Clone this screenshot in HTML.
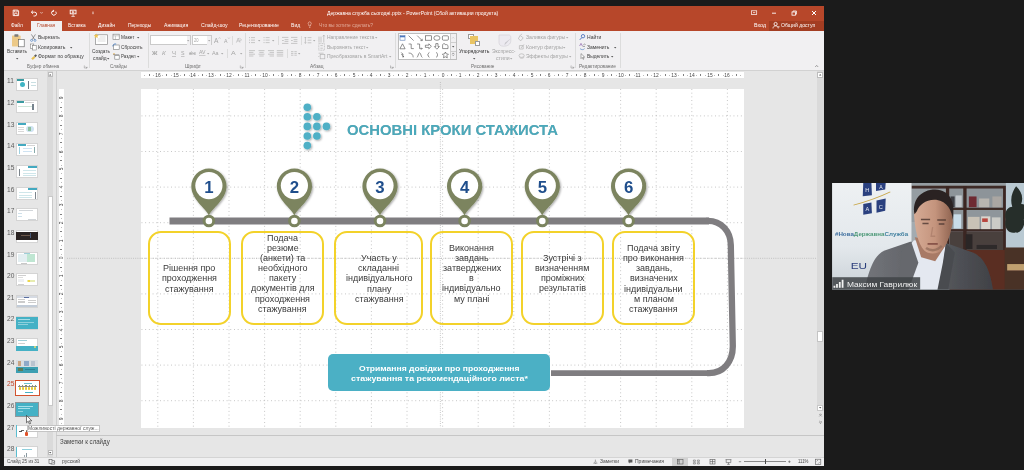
<!DOCTYPE html>
<html><head><meta charset="utf-8">
<style>
*{margin:0;padding:0;box-sizing:border-box}
html,body{width:1024px;height:470px;overflow:hidden;background:#1b1b1b;font-family:"Liberation Sans",sans-serif}
#root{position:absolute;left:0;top:0;width:1024px;height:470px;overflow:hidden;background:#1b1b1b;opacity:0.999;filter:blur(0.3px)}
.a{position:absolute}
.t{position:absolute;white-space:nowrap;line-height:1;font-size:5.4px;color:#4a4a4a;transform:translateY(-50%)}
.w{color:#fff}
.g{color:#a6a6a6}
svg{position:absolute;overflow:visible}
text{font-family:"Liberation Sans",sans-serif;white-space:pre}
</style></head><body><div id="root">

<div class="a" style="left:4px;top:6.1px;width:819.7px;height:460px;background:#e6e6e6;"></div>
<div class="a" style="left:4px;top:6.1px;width:819.7px;height:24.9px;background:#b7472a;"></div>
<div class="a" style="left:4px;top:30.6px;width:819.7px;height:40px;background:#f1f0f2;border-bottom:0.8px solid #d2d2d2;"></div>
<svg class="a" style="left:327.30px;top:-5px;" width="10" height="26"><text x="0" y="20" font-size="5.3" text-anchor="start" textLength="171.20" lengthAdjust="spacingAndGlyphs" fill="#fff">Державна служба сьогодні.pptx - PowerPoint (Сбой активации продукта)</text></svg>
<div class="a" style="left:31px;top:20.5px;width:30.5px;height:10.5px;background:#f1f0f2;"></div>
<svg class="a" style="left:11.20px;top:7px;" width="10" height="26"><text x="0" y="20" font-size="5.3" text-anchor="start" textLength="11.80" lengthAdjust="spacingAndGlyphs" fill="#fff">Файл</text></svg>
<svg class="a" style="left:68.00px;top:7px;" width="10" height="26"><text x="0" y="20" font-size="5.3" text-anchor="start" textLength="17.60" lengthAdjust="spacingAndGlyphs" fill="#fff">Вставка</text></svg>
<svg class="a" style="left:98.00px;top:7px;" width="10" height="26"><text x="0" y="20" font-size="5.3" text-anchor="start" textLength="17.00" lengthAdjust="spacingAndGlyphs" fill="#fff">Дизайн</text></svg>
<svg class="a" style="left:128.00px;top:7px;" width="10" height="26"><text x="0" y="20" font-size="5.3" text-anchor="start" textLength="23.20" lengthAdjust="spacingAndGlyphs" fill="#fff">Переходы</text></svg>
<svg class="a" style="left:163.80px;top:7px;" width="10" height="26"><text x="0" y="20" font-size="5.3" text-anchor="start" textLength="24.20" lengthAdjust="spacingAndGlyphs" fill="#fff">Анимация</text></svg>
<svg class="a" style="left:200.80px;top:7px;" width="10" height="26"><text x="0" y="20" font-size="5.3" text-anchor="start" textLength="26.70" lengthAdjust="spacingAndGlyphs" fill="#fff">Слайд-шоу</text></svg>
<svg class="a" style="left:239.00px;top:7px;" width="10" height="26"><text x="0" y="20" font-size="5.3" text-anchor="start" textLength="40.00" lengthAdjust="spacingAndGlyphs" fill="#fff">Рецензирование</text></svg>
<svg class="a" style="left:291.00px;top:7px;" width="10" height="26"><text x="0" y="20" font-size="5.3" text-anchor="start" textLength="9.20" lengthAdjust="spacingAndGlyphs" fill="#fff">Вид</text></svg>
<svg class="a" style="left:37.00px;top:7px;" width="10" height="26"><text x="0" y="20" font-size="5.3" text-anchor="start" textLength="18.20" lengthAdjust="spacingAndGlyphs" fill="#b7472a">Главная</text></svg>
<svg class="a" style="left:319.00px;top:7px;" width="10" height="26"><text x="0" y="20" font-size="5.3" text-anchor="start" textLength="54.00" lengthAdjust="spacingAndGlyphs" fill="#e3ad9c">Что вы хотите сделать?</text></svg>
<svg class="a" style="left:760.00px;top:7px;" width="10" height="26"><text x="0" y="20" font-size="5.3" text-anchor="middle" fill="#fff">Вход</text></svg>
<div class="a" style="left:769px;top:20.5px;width:54.7px;height:10.1px;background:#a33d22;"></div>
<svg class="a" style="left:781.00px;top:7px;" width="10" height="26"><text x="0" y="20" font-size="5.3" text-anchor="start" textLength="34.20" lengthAdjust="spacingAndGlyphs" fill="#fff">Общий доступ</text></svg>
<svg class="a" style="left:0;top:0" width="1024" height="32" viewBox="0 0 1024 32" fill="none" stroke="#fff" stroke-width="0.9">
<path d="M13.200 10.100h4.600l0.800 0.800v4.700h-5.400z"/><path d="M14.400 10.200v1.800h2.800v-1.800M14.400 15.600v-2h2.800v2" stroke-width="0.700"/>
<path d="M31.5 12.2h3.2a1.8 1.8 0 0 1 0 3.8h-1.2M33 10.6l-1.7 1.6l1.7 1.6"/><path d="M40.5 12.3l1 1l1-1" stroke-width="0.7"/>
<path d="M55.8 11.6a2.3 2.3 0 1 1-2.6-0.9M53.6 9.9v1.6h-1.6"/>
<rect x="70.2" y="10.2" width="5.8" height="3.6"/><path d="M73.1 13.8v2.4M71.4 16.4h3.4M72.4 11.2l1.8 0.9l-1.8 0.9z" stroke-width="0.7"/>
<path d="M92.2 12.2h1.6M92.4 13.4l0.6 0.7l0.6-0.7" stroke-width="0.7"/>
<rect x="751.5" y="10.8" width="5.2" height="3.6" stroke-width="0.7"/><path d="M753 12.6h2.2" stroke-width="0.7"/>
<path d="M772 13.2h4"/>
<rect x="792" y="12" width="3.4" height="3.2" stroke-width="0.8"/><path d="M793 12v-1h3.4v3.2h-1" stroke-width="0.8"/>
<path d="M812 11l4 4M816 11l-4 4" stroke-width="1"/>
<path d="M309 27.4h1.4M308.6 24.4a1.5 1.5 0 1 1 2.2 0l-0.4 1.6h-1.4z" stroke="#f3d2c6" stroke-width="0.6"/>
<circle cx="775.6" cy="24" r="1.6" stroke-width="0.8"/><path d="M773 28.4c0-3.4 5.2-3.4 5.2 0M777.6 26.8h2" stroke-width="0.8"/>
</svg>
<div class="a" style="left:88.5px;top:33px;width:0.8px;height:35px;background:#dcdcdc;"></div>
<div class="a" style="left:148.0px;top:33px;width:0.8px;height:35px;background:#dcdcdc;"></div>
<div class="a" style="left:244.9px;top:33px;width:0.8px;height:35px;background:#dcdcdc;"></div>
<div class="a" style="left:394.8px;top:33px;width:0.8px;height:35px;background:#dcdcdc;"></div>
<div class="a" style="left:575.3000000000001px;top:33px;width:0.8px;height:35px;background:#dcdcdc;"></div>
<div class="a" style="left:620.3000000000001px;top:33px;width:0.8px;height:35px;background:#dcdcdc;"></div>
<svg class="a" style="left:26.70px;top:48px;" width="10" height="26"><text x="0" y="20" font-size="5" text-anchor="start" textLength="32.20" lengthAdjust="spacingAndGlyphs" fill="#6e6e6e">Буфер обмена</text></svg>
<svg class="a" style="left:110.10px;top:48px;" width="10" height="26"><text x="0" y="20" font-size="5" text-anchor="start" textLength="17.00" lengthAdjust="spacingAndGlyphs" fill="#6e6e6e">Слайды</text></svg>
<svg class="a" style="left:185.30px;top:48px;" width="10" height="26"><text x="0" y="20" font-size="5" text-anchor="start" textLength="16.10" lengthAdjust="spacingAndGlyphs" fill="#6e6e6e">Шрифт</text></svg>
<svg class="a" style="left:310.20px;top:48px;" width="10" height="26"><text x="0" y="20" font-size="5" text-anchor="start" textLength="13.60" lengthAdjust="spacingAndGlyphs" fill="#6e6e6e">Абзац</text></svg>
<svg class="a" style="left:470.90px;top:48px;" width="10" height="26"><text x="0" y="20" font-size="5" text-anchor="start" textLength="23.40" lengthAdjust="spacingAndGlyphs" fill="#6e6e6e">Рисование</text></svg>
<svg class="a" style="left:579.40px;top:48px;" width="10" height="26"><text x="0" y="20" font-size="5" text-anchor="start" textLength="36.90" lengthAdjust="spacingAndGlyphs" fill="#6e6e6e">Редактирование</text></svg>
<svg class="a" style="left:7.00px;top:33px;" width="10" height="26"><text x="0" y="20" font-size="5.4" text-anchor="start" textLength="20.10" lengthAdjust="spacingAndGlyphs" fill="#3c3c3c">Вставить</text></svg>
<svg class="a" style="left:16.0px;top:57.6px" width="2.4" height="1.4" viewBox="0 0 2.4 1.4"><path d="M0 0h2.4l-1.2 1.4z" fill="#555"/></svg>
<svg class="a" style="left:38.10px;top:19px;" width="10" height="26"><text x="0" y="20" font-size="5.4" text-anchor="start" textLength="21.70" lengthAdjust="spacingAndGlyphs" fill="#3c3c3c">Вырезать</text></svg>
<svg class="a" style="left:38.10px;top:29px;" width="10" height="26"><text x="0" y="20" font-size="5.4" text-anchor="start" textLength="27.40" lengthAdjust="spacingAndGlyphs" fill="#3c3c3c">Копировать</text></svg>
<svg class="a" style="left:69.8px;top:46.6px" width="2.4" height="1.4" viewBox="0 0 2.4 1.4"><path d="M0 0h2.4l-1.2 1.4z" fill="#555"/></svg>
<svg class="a" style="left:38.10px;top:38px;" width="10" height="26"><text x="0" y="20" font-size="5.4" text-anchor="start" textLength="45.70" lengthAdjust="spacingAndGlyphs" fill="#3c3c3c">Формат по образцу</text></svg>
<svg class="a" style="left:92.00px;top:33px;" width="10" height="26"><text x="0" y="20" font-size="5.4" text-anchor="start" textLength="17.90" lengthAdjust="spacingAndGlyphs" fill="#3c3c3c">Создать</text></svg>
<svg class="a" style="left:93.00px;top:40px;" width="10" height="26"><text x="0" y="20" font-size="5.4" text-anchor="start" textLength="13.60" lengthAdjust="spacingAndGlyphs" fill="#3c3c3c">слайд</text></svg>
<svg class="a" style="left:107.39999999999999px;top:58.0px" width="2.4" height="1.4" viewBox="0 0 2.4 1.4"><path d="M0 0h2.4l-1.2 1.4z" fill="#555"/></svg>
<svg class="a" style="left:121.30px;top:19px;" width="10" height="26"><text x="0" y="20" font-size="5.4" text-anchor="start" textLength="13.50" lengthAdjust="spacingAndGlyphs" fill="#3c3c3c">Макет</text></svg>
<svg class="a" style="left:136.5px;top:36.8px" width="2.4" height="1.4" viewBox="0 0 2.4 1.4"><path d="M0 0h2.4l-1.2 1.4z" fill="#555"/></svg>
<svg class="a" style="left:121.30px;top:29px;" width="10" height="26"><text x="0" y="20" font-size="5.4" text-anchor="start" textLength="21.50" lengthAdjust="spacingAndGlyphs" fill="#3c3c3c">Сбросить</text></svg>
<svg class="a" style="left:121.30px;top:38px;" width="10" height="26"><text x="0" y="20" font-size="5.4" text-anchor="start" textLength="14.60" lengthAdjust="spacingAndGlyphs" fill="#3c3c3c">Раздел</text></svg>
<svg class="a" style="left:137.4px;top:56.1px" width="2.4" height="1.4" viewBox="0 0 2.4 1.4"><path d="M0 0h2.4l-1.2 1.4z" fill="#555"/></svg>
<div class="a" style="left:150.4px;top:35.3px;width:40.4px;height:10px;background:#fff;border:0.7px solid #cacaca;"></div>
<div class="a" style="left:191.9px;top:35.3px;width:19.7px;height:10px;background:#fff;border:0.7px solid #cacaca;"></div>
<div class="a" style="left:186.6px;top:36px;width:3.6px;height:8.6px;background:#f1f0f2;"></div>
<div class="a" style="left:207.4px;top:36px;width:3.6px;height:8.6px;background:#f1f0f2;"></div>
<svg class="a" style="left:187.20000000000002px;top:39.8px" width="2.4" height="1.4" viewBox="0 0 2.4 1.4"><path d="M0 0h2.4l-1.2 1.4z" fill="#aaa"/></svg>
<svg class="a" style="left:208.0px;top:39.8px" width="2.4" height="1.4" viewBox="0 0 2.4 1.4"><path d="M0 0h2.4l-1.2 1.4z" fill="#aaa"/></svg>
<svg class="a" style="left:194.00px;top:22px;" width="10" height="26"><text x="0" y="20" font-size="5" text-anchor="start" textLength="4.50" lengthAdjust="spacingAndGlyphs" fill="#a6a6a6">20</text></svg>
<svg class="a" style="left:213.80px;top:23px;" width="10" height="26"><text x="0" y="20" font-size="6.4" text-anchor="start" textLength="4.40" lengthAdjust="spacingAndGlyphs" fill="#a6a6a6">A</text></svg>
<svg class="a" style="left:224.10px;top:23px;" width="10" height="26"><text x="0" y="20" font-size="5.4" text-anchor="start" textLength="3.50" lengthAdjust="spacingAndGlyphs" fill="#a6a6a6">A</text></svg>
<svg class="a" style="left:0;top:0" width="1024" height="72" viewBox="0 0 1024 72" fill="none" stroke="#b0b0b0" stroke-width="0.6"><path d="M218.6 38.6l0.9-1l0.9 1M228 37.6l0.9 1l0.9-1"/><path d="M236.4 42.6l1.8-4.6l1.8 4.6M237 41h2.4M239.4 38.2l2 1.4l-1.2 1.8" /></svg>
<div class="a" style="left:232.3px;top:36.2px;width:0.6px;height:8.6px;background:#dcdcdc;"></div>
<div class="a" style="left:227.2px;top:48.6px;width:0.6px;height:9px;background:#dcdcdc;"></div>
<svg class="a" style="left:152.00px;top:35px;" width="10" height="26"><text x="0" y="20" font-size="5.6" text-anchor="start" textLength="5.50" lengthAdjust="spacingAndGlyphs" fill="#a6a6a6" font-weight="bold">Ж</text></svg>
<svg class="a" style="left:161.80px;top:35px;" width="10" height="26"><text x="0" y="20" font-size="5.6" text-anchor="start" textLength="3.70" lengthAdjust="spacingAndGlyphs" fill="#a6a6a6" font-style="italic">К</text></svg>
<svg class="a" style="left:171.80px;top:35px;" width="10" height="26"><text x="0" y="20" font-size="5.6" text-anchor="start" textLength="4.00" lengthAdjust="spacingAndGlyphs" fill="#a6a6a6" text-decoration="underline">Ч</text></svg>
<svg class="a" style="left:181.30px;top:35px;" width="10" height="26"><text x="0" y="20" font-size="5.6" text-anchor="start" textLength="3.50" lengthAdjust="spacingAndGlyphs" fill="#a6a6a6" text-decoration="underline">S</text></svg>
<svg class="a" style="left:189.20px;top:35px;" width="10" height="26"><text x="0" y="20" font-size="5.2" text-anchor="start" textLength="6.80" lengthAdjust="spacingAndGlyphs" fill="#a6a6a6" text-decoration="line-through">abc</text></svg>
<svg class="a" style="left:198.50px;top:34px;" width="10" height="26"><text x="0" y="20" font-size="5" text-anchor="start" textLength="6.50" lengthAdjust="spacingAndGlyphs" fill="#a6a6a6" text-decoration="underline">AV</text></svg>
<svg class="a" style="left:206.8px;top:52.8px" width="2.4" height="1.4" viewBox="0 0 2.4 1.4"><path d="M0 0h2.4l-1.2 1.4z" fill="#aaa"/></svg>
<svg class="a" style="left:212.40px;top:35px;" width="10" height="26"><text x="0" y="20" font-size="5.6" text-anchor="start" textLength="6.60" lengthAdjust="spacingAndGlyphs" fill="#a6a6a6">Aa</text></svg>
<svg class="a" style="left:221.0px;top:52.8px" width="2.4" height="1.4" viewBox="0 0 2.4 1.4"><path d="M0 0h2.4l-1.2 1.4z" fill="#aaa"/></svg>
<svg class="a" style="left:231.40px;top:35px;" width="10" height="26"><text x="0" y="20" font-size="6.2" text-anchor="start" textLength="4.70" lengthAdjust="spacingAndGlyphs" fill="#a6a6a6">A</text></svg>
<svg class="a" style="left:239.8px;top:52.8px" width="2.4" height="1.4" viewBox="0 0 2.4 1.4"><path d="M0 0h2.4l-1.2 1.4z" fill="#aaa"/></svg>
<svg class="a" style="left:0;top:0" width="1024" height="72" viewBox="0 0 1024 72" fill="none" stroke="#b4b4b4" stroke-width="0.7"><path d="M251 37.6h4"/><path d="M249 37.6h0.9" stroke-width="0.9"/><path d="M251 40.1h4"/><path d="M249 40.1h0.9" stroke-width="0.9"/><path d="M251 42.6h4"/><path d="M249 42.6h0.9" stroke-width="0.9"/><path d="M265.6 37.6h4"/><path d="M263.6 37.6h0.9" stroke-width="0.9"/><path d="M265.6 40.1h4"/><path d="M263.6 40.1h0.9" stroke-width="0.9"/><path d="M265.6 42.6h4"/><path d="M263.6 42.6h0.9" stroke-width="0.9"/><path d="M282 37.4h6.4M284.6 39.6h3.8M284.6 41.4h3.8M282 43.4h6.4M282 40.5h1.8"/><path d="M291 37.4h6.4M293.6 39.6h3.8M293.6 41.4h3.8M291 43.4h6.4M291 40.5h1.8"/><path d="M307.6 37.6h3.8M307.6 40.2h3.8M307.6 42.8h3.8M305.4 37v6.4M304.6 38l0.8-1l0.8 1M304.6 42.4l0.8 1l0.8-1"/><path d="M249 50.6h6"/><path d="M249 52.4h4.4"/><path d="M249 54.2h6"/><path d="M249 56h4.4"/><path d="M258.5 50.6h6"/><path d="M259.3 52.4h4.4"/><path d="M258.5 54.2h6"/><path d="M259.3 56h4.4"/><path d="M268 50.6h6"/><path d="M269.6 52.4h4.4"/><path d="M268 54.2h6"/><path d="M269.6 56h4.4"/><path d="M276.8 50.6h6.4"/><path d="M276.8 52.4h6.4"/><path d="M276.8 54.2h6.4"/><path d="M276.8 56h6.4"/><path d="M291 51.6h2.4M291 53.4h2.4M291 55.2h2.4M294.4 51.6h2.4M294.4 53.4h2.4M294.4 55.2h2.4"/><path d="M319 42.6v-6M321 42.6v-6M323.8 42.6v-7.4M322.8 36.4l1-1.4l1 1.4"/><rect x="318.8" y="43.6" width="5.6" height="6.6" stroke-dasharray="1 0.6"/><path d="M320.4 45.6h2.4M320.4 48.2h2.4"/><rect x="320.2" y="54.6" width="4.6" height="4.2"/><path d="M318.6 53.2h5M319.4 55.8l-1 1.2"/><path d="M520 35.4l3.2 2.4l-2.4 3l-2.4-2zM521 35l0.6-1.2" /><path d="M519.4 45.6h3.8v3.4h-3.8zM521 48l3-3.6"/><ellipse cx="521.6" cy="55.6" rx="2.6" ry="1.8"/><path d="M519.6 57.6c1.4 1 3.4 0.8 4.6-0.4"/><path d="M84.5 65.6h-0.2v2.4h2.4M85.7 66.6l1.4 1.4M87.10000000000001 66.8v1.2h-1.2" stroke="#8a8a8a" stroke-width="0.5"/><path d="M240.5 65.6h-0.2v2.4h2.4M241.7 66.6l1.4 1.4M243.1 66.8v1.2h-1.2" stroke="#8a8a8a" stroke-width="0.5"/><path d="M390.7 65.6h-0.2v2.4h2.4M391.9 66.6l1.4 1.4M393.29999999999995 66.8v1.2h-1.2" stroke="#8a8a8a" stroke-width="0.5"/><path d="M571.1999999999999 65.6h-0.2v2.4h2.4M572.4 66.6l1.4 1.4M573.8 66.8v1.2h-1.2" stroke="#8a8a8a" stroke-width="0.5"/></svg>
<svg class="a" style="left:257.8px;top:39.6px" width="2.4" height="1.4" viewBox="0 0 2.4 1.4"><path d="M0 0h2.4l-1.2 1.4z" fill="#aaa"/></svg>
<svg class="a" style="left:272.40000000000003px;top:39.6px" width="2.4" height="1.4" viewBox="0 0 2.4 1.4"><path d="M0 0h2.4l-1.2 1.4z" fill="#aaa"/></svg>
<svg class="a" style="left:312.7px;top:39.6px" width="2.4" height="1.4" viewBox="0 0 2.4 1.4"><path d="M0 0h2.4l-1.2 1.4z" fill="#aaa"/></svg>
<svg class="a" style="left:298.40000000000003px;top:53.0px" width="2.4" height="1.4" viewBox="0 0 2.4 1.4"><path d="M0 0h2.4l-1.2 1.4z" fill="#aaa"/></svg>
<div class="a" style="left:278px;top:36.2px;width:0.6px;height:8.6px;background:#dcdcdc;"></div>
<div class="a" style="left:301.4px;top:36.2px;width:0.6px;height:8.6px;background:#dcdcdc;"></div>
<div class="a" style="left:286.6px;top:49px;width:0.6px;height:9px;background:#dcdcdc;"></div>
<svg class="a" style="left:326.70px;top:19px;" width="10" height="26"><text x="0" y="20" font-size="5.4" text-anchor="start" textLength="47.20" lengthAdjust="spacingAndGlyphs" fill="#a2a2a2">Направление текста</text></svg>
<svg class="a" style="left:374.8px;top:36.8px" width="2.4" height="1.4" viewBox="0 0 2.4 1.4"><path d="M0 0h2.4l-1.2 1.4z" fill="#aaa"/></svg>
<svg class="a" style="left:326.70px;top:29px;" width="10" height="26"><text x="0" y="20" font-size="5.4" text-anchor="start" textLength="38.40" lengthAdjust="spacingAndGlyphs" fill="#a2a2a2">Выровнять текст</text></svg>
<svg class="a" style="left:366.1px;top:46.699999999999996px" width="2.4" height="1.4" viewBox="0 0 2.4 1.4"><path d="M0 0h2.4l-1.2 1.4z" fill="#aaa"/></svg>
<svg class="a" style="left:326.70px;top:38px;" width="10" height="26"><text x="0" y="20" font-size="5.4" text-anchor="start" textLength="60.40" lengthAdjust="spacingAndGlyphs" fill="#a2a2a2">Преобразовать в SmartArt</text></svg>
<svg class="a" style="left:388.5px;top:56.1px" width="2.4" height="1.4" viewBox="0 0 2.4 1.4"><path d="M0 0h2.4l-1.2 1.4z" fill="#aaa"/></svg>
<div class="a" style="left:398.2px;top:33.1px;width:58.5px;height:26.5px;background:#fff;border:0.7px solid #bdbdbd;"></div>
<div class="a" style="left:450.3px;top:33.7px;width:5.9px;height:25.3px;background:#f1f0f2;border-left:0.6px solid #cfcfcf;"></div>
<div class="a" style="left:450.6px;top:42px;width:5.4px;height:0.5px;background:#cfcfcf;"></div>
<div class="a" style="left:450.6px;top:50.6px;width:5.4px;height:0.5px;background:#cfcfcf;"></div>
<svg class="a" style="left:0;top:0" width="1024" height="72" viewBox="0 0 1024 72" fill="none" stroke="#4a4a4a" stroke-width="0.6"><rect x="400" y="35.6" width="5" height="4.6" stroke="#5a7ab0"/><path d="M400 36.6h5" stroke="#4a78c0" stroke-width="1.4"/><path d="M408.6 35.6l5 5M417.2 35.6l5 5M422.2 40.6v-1.8M422.2 40.6h-1.8"/><rect x="425.4" y="35.8" width="6" height="4.4"/><ellipse cx="436.9" cy="38" rx="3.1" ry="2.3"/><rect x="442.4" y="35.8" width="6" height="4.4" rx="1"/><path d="M402.5 43.8l2.6 5h-5.2z"/><path d="M408.6 44h2.6v4.6h2.6M417 44h2.6v4.6h2.6M421.2 47.6l1 1l-1 1"/><path d="M425.4 45.2h3.4v-1.4l2.6 2.5l-2.6 2.5v-1.4h-3.4zM435.8 43.6h2.2v3h1.4l-2.5 2.6l-2.5-2.6h1.4z"/><path d="M442.6 48.6h5.4v-2.4a1.6 1.6 0 0 0-2.4-1.4a1.5 1.5 0 0 0-3 1z"/><path d="M401.2 52.4l2 2h-1.6l2 2.6M403.6 57l-0.2-1.4M403.6 57l-1.4-0.2M408.6 53c3 0 4.6 1.6 4.6 4.4M416.8 57.4c1.4 0 1.4-4.6 2.8-4.6s1.4 4.6 2.8 4.6"/><path d="M429.4 52.4c-1.2 0-0.8 2.4-1.8 2.4c1 0 0.6 2.6 1.8 2.6M436.2 52.4c1.2 0 0.8 2.4 1.8 2.4c-1 0-0.6 2.6-1.8 2.6"/><path d="M445.4 52l0.9 1.9l2.1 0.3l-1.5 1.5l0.4 2.1l-1.9-1l-1.9 1l0.4-2.1l-1.5-1.5l2.1-0.3z"/><path d="M452.2 38.4l1-1l1 1" stroke="#b8b8b8"/><path d="M452.2 53.4h2M452.2 54.6l1 1l1-1" stroke-width="0.5"/></svg>
<svg class="a" style="left:452.0px;top:46.0px" width="2.4" height="1.4" viewBox="0 0 2.4 1.4"><path d="M0 0h2.4l-1.2 1.4z" fill="#555"/></svg>
<div class="a" style="left:468.4px;top:34.2px;width:5.2px;height:4.8px;background:#fff;border:0.6px solid #9a9a9a;"></div>
<div class="a" style="left:470.2px;top:36.2px;width:7.8px;height:7.8px;background:#e9c463;"></div>
<div class="a" style="left:475px;top:41px;width:4.8px;height:4.8px;background:#fff;border:0.6px solid #9a9a9a;"></div>
<svg class="a" style="left:458.80px;top:33px;" width="10" height="26"><text x="0" y="20" font-size="5.6" text-anchor="start" textLength="30.50" lengthAdjust="spacingAndGlyphs" fill="#2e2e2e">Упорядочить</text></svg>
<svg class="a" style="left:473.0px;top:57.6px" width="2.4" height="1.4" viewBox="0 0 2.4 1.4"><path d="M0 0h2.4l-1.2 1.4z" fill="#555"/></svg>
<svg class="a" style="left:491.80px;top:33px;" width="10" height="26"><text x="0" y="20" font-size="5.4" text-anchor="start" textLength="23.40" lengthAdjust="spacingAndGlyphs" fill="#a2a2a2">Экспресс-</text></svg>
<svg class="a" style="left:495.80px;top:40px;" width="10" height="26"><text x="0" y="20" font-size="5.4" text-anchor="start" textLength="13.60" lengthAdjust="spacingAndGlyphs" fill="#a2a2a2">стили</text></svg>
<svg class="a" style="left:510.2px;top:58.1px" width="2.4" height="1.4" viewBox="0 0 2.4 1.4"><path d="M0 0h2.4l-1.2 1.4z" fill="#aaa"/></svg>
<svg class="a" style="left:0;top:0" width="1024" height="72" viewBox="0 0 1024 72" fill="none"><path d="M499 35h9.6c1.6 0 2.2 1 2.2 2.4v3c0 4-3 5.8-7.4 5.8c-3 0-4.4-1.400-4.400-3.600z" fill="#eceaf0" stroke="#d0ced4" stroke-width="0.6"/><path d="M510.600 38.600l-4.400 5l-1.800 1.600l0.600-2.400z" fill="#c8c6cc"/></svg>
<svg class="a" style="left:525.90px;top:19px;" width="10" height="26"><text x="0" y="20" font-size="5.4" text-anchor="start" textLength="39.20" lengthAdjust="spacingAndGlyphs" fill="#a2a2a2">Заливка фигуры</text></svg>
<svg class="a" style="left:566.0999999999999px;top:36.8px" width="2.4" height="1.4" viewBox="0 0 2.4 1.4"><path d="M0 0h2.4l-1.2 1.4z" fill="#aaa"/></svg>
<svg class="a" style="left:525.90px;top:29px;" width="10" height="26"><text x="0" y="20" font-size="5.4" text-anchor="start" textLength="36.70" lengthAdjust="spacingAndGlyphs" fill="#a2a2a2">Контур фигуры</text></svg>
<svg class="a" style="left:563.4px;top:46.699999999999996px" width="2.4" height="1.4" viewBox="0 0 2.4 1.4"><path d="M0 0h2.4l-1.2 1.4z" fill="#aaa"/></svg>
<svg class="a" style="left:525.90px;top:38px;" width="10" height="26"><text x="0" y="20" font-size="5.4" text-anchor="start" textLength="41.80" lengthAdjust="spacingAndGlyphs" fill="#a2a2a2">Эффекты фигуры</text></svg>
<svg class="a" style="left:568.6999999999999px;top:56.1px" width="2.4" height="1.4" viewBox="0 0 2.4 1.4"><path d="M0 0h2.4l-1.2 1.4z" fill="#aaa"/></svg>
<svg class="a" style="left:587.30px;top:19px;" width="10" height="26"><text x="0" y="20" font-size="5.4" text-anchor="start" textLength="14.40" lengthAdjust="spacingAndGlyphs" fill="#3c3c3c">Найти</text></svg>
<svg class="a" style="left:587.30px;top:29px;" width="10" height="26"><text x="0" y="20" font-size="5.4" text-anchor="start" textLength="22.40" lengthAdjust="spacingAndGlyphs" fill="#3c3c3c">Заменить</text></svg>
<svg class="a" style="left:613.6999999999999px;top:46.6px" width="2.4" height="1.4" viewBox="0 0 2.4 1.4"><path d="M0 0h2.4l-1.2 1.4z" fill="#555"/></svg>
<svg class="a" style="left:587.30px;top:38px;" width="10" height="26"><text x="0" y="20" font-size="5.4" text-anchor="start" textLength="22.40" lengthAdjust="spacingAndGlyphs" fill="#3c3c3c">Выделить</text></svg>
<svg class="a" style="left:611.1999999999999px;top:56.1px" width="2.4" height="1.4" viewBox="0 0 2.4 1.4"><path d="M0 0h2.4l-1.2 1.4z" fill="#555"/></svg>
<svg class="a" style="left:0;top:0" width="1024" height="72" viewBox="0 0 1024 72" fill="none"><rect x="12" y="35.6" width="8.6" height="10.8" rx="0.6" fill="#ecc988"/><rect x="14.4" y="34.2" width="4" height="2.6" rx="0.6" fill="#7a7a7a"/><rect x="18.4" y="39.4" width="5.8" height="7.4" fill="#fff" stroke="#5a5a5a" stroke-width="0.6"/><path d="M31.4 34.4l3.400 5.400M35.400 34.400l-3.400 5.400" stroke="#5a5a5a" stroke-width="0.6"/><circle cx="31.600" cy="40.400" r="1" stroke="#3f78c0" stroke-width="0.600"/><circle cx="35" cy="40.400" r="1" stroke="#3f78c0" stroke-width="0.600"/><rect x="30.400" y="44" width="3.400" height="4.400" fill="#fff" stroke="#6a6a6a" stroke-width="0.500"/><rect x="32.600" y="45.600" width="3.600" height="4.400" fill="#fff" stroke="#6a6a6a" stroke-width="0.500"/><path d="M31.200 58.400l2.800-2.400l1.400 1.400l-2.600 2.600z" fill="#e8c050"/><path d="M34 55.800l1.800-1.600l1.200 1.200l-1.600 1.800z" fill="#5a5a5a"/><rect x="95.600" y="34.800" width="12" height="9.800" fill="#fff" stroke="#8a8a8a" stroke-width="0.700"/><path d="M97.600 39h8M97.600 41h8M99.600 37h6" stroke="#c8c8c8" stroke-width="0.600"/><path d="M96.200 33.400l0.800 1.600l1.700 0.200l-1.300 1.200l0.400 1.700l-1.600-0.900l-1.500 0.900l0.300-1.700l-1.200-1.200l1.700-0.200z" fill="#eec453"/><rect x="113" y="34.200" width="6.200" height="5.400" fill="#fff" stroke="#7a7a7a" stroke-width="0.600"/><path d="M113 35.800h6.200M115.400 35.800v3.800" stroke="#9a9a9a" stroke-width="0.500"/><rect x="113.600" y="45" width="5.600" height="4.600" fill="#fff" stroke="#7a7a7a" stroke-width="0.600"/><path d="M112.800 46.400c0-2 1.600-2.800 3.400-2.400" stroke="#3f78c0" stroke-width="0.800"/><path d="M113 54h2" stroke="#e0a030" stroke-width="0.900"/><path d="M113.200 54.600h6" stroke="#7a7a7a" stroke-width="0.600"/><rect x="114.800" y="55.600" width="4.400" height="3.600" fill="#fff" stroke="#7a7a7a" stroke-width="0.600"/><circle cx="583" cy="36.200" r="1.700" stroke="#3f68b8" stroke-width="0.800"/><path d="M581.800 37.600l-2 2.200" stroke="#3f68b8" stroke-width="0.900"/><path d="M579.600 46l1.400-2.600l1.400 2.600" stroke="#7a4aa0" stroke-width="0.600"/><path d="M580 48.600c1.400 1.400 3.400 1.400 4.600 0" stroke="#3f78c0" stroke-width="0.600"/><path d="M582.600 46.400h2.400" stroke="#666" stroke-width="0.600"/><path d="M583.400 44.600c0.800-1 2-0.600 2 0.400" stroke="#5a5a5a" stroke-width="0.500"/><path d="M581 53.600v5l1.200-1.200l0.900 2l0.800-0.400l-0.900-1.900h1.700z" fill="#fff" stroke="#5a5a5a" stroke-width="0.500"/></svg>
<svg class="a" style="left:815.400px;top:65px" width="3.400" height="2.200" viewBox="0 0 3.400 2.200"><path d="M0.200 2l1.500-1.600l1.500 1.600" fill="none" stroke="#666" stroke-width="0.600"/></svg>
<div class="a" style="left:4px;top:71px;width:51.5px;height:386px;background:#e6e6e6;"></div>
<div class="a" style="left:55.5px;top:71px;width:0.8px;height:386px;background:#cfcfcf;"></div>
<div class="a" style="left:47.3px;top:71px;width:6px;height:386px;background:#dadada;"></div>
<div class="a" style="left:47.6px;top:72px;width:5.4px;height:5.4px;background:#fff;border:0.5px solid #bdbdbd;"></div>
<div class="a" style="left:47.6px;top:450.1px;width:5.3px;height:5.2px;background:#fff;border:0.5px solid #bdbdbd;"></div>
<div class="a" style="left:47.8px;top:196px;width:5px;height:209.5px;background:#fff;border:0.5px solid #c8c8c8;"></div>
<svg class="a" style="left:49.100px;top:74px" width="2.400" height="1.400" viewBox="0 0 2.400 1.400"><path d="M0 1.400h2.400l-1.200-1.400z" fill="#555"/></svg>
<svg class="a" style="left:49.099999999999994px;top:452.2px" width="2.4" height="1.4" viewBox="0 0 2.4 1.4"><path d="M0 0h2.4l-1.2 1.4z" fill="#555"/></svg>
<svg class="a" style="left:6.60px;top:63px;" width="10" height="26"><text x="0" y="20" font-size="6.6" text-anchor="start" fill="#5c5c5c">11</text></svg>
<div class="a" style="left:16px;top:78.3px;width:22.4px;height:13.2px;background:#fff;border:0.5px solid #d4d4d4;"></div>
<svg class="a" style="left:6.60px;top:85px;" width="10" height="26"><text x="0" y="20" font-size="6.6" text-anchor="start" fill="#5c5c5c">12</text></svg>
<div class="a" style="left:16px;top:99.94999999999999px;width:22.4px;height:13.2px;background:#fff;border:0.5px solid #d4d4d4;"></div>
<svg class="a" style="left:6.60px;top:107px;" width="10" height="26"><text x="0" y="20" font-size="6.6" text-anchor="start" fill="#5c5c5c">13</text></svg>
<div class="a" style="left:16px;top:121.6px;width:22.4px;height:13.2px;background:#fff;border:0.5px solid #d4d4d4;"></div>
<svg class="a" style="left:6.60px;top:128px;" width="10" height="26"><text x="0" y="20" font-size="6.6" text-anchor="start" fill="#5c5c5c">14</text></svg>
<div class="a" style="left:16px;top:143.25px;width:22.4px;height:13.2px;background:#fff;border:0.5px solid #d4d4d4;"></div>
<svg class="a" style="left:6.60px;top:150px;" width="10" height="26"><text x="0" y="20" font-size="6.6" text-anchor="start" fill="#5c5c5c">15</text></svg>
<div class="a" style="left:16px;top:164.89999999999998px;width:22.4px;height:13.2px;background:#fff;border:0.5px solid #d4d4d4;"></div>
<svg class="a" style="left:6.60px;top:172px;" width="10" height="26"><text x="0" y="20" font-size="6.6" text-anchor="start" fill="#5c5c5c">16</text></svg>
<div class="a" style="left:16px;top:186.55px;width:22.4px;height:13.2px;background:#fff;border:0.5px solid #d4d4d4;"></div>
<svg class="a" style="left:6.60px;top:193px;" width="10" height="26"><text x="0" y="20" font-size="6.6" text-anchor="start" fill="#5c5c5c">17</text></svg>
<div class="a" style="left:16px;top:208.2px;width:22.4px;height:13.2px;background:#fff;border:0.5px solid #d4d4d4;"></div>
<svg class="a" style="left:6.60px;top:215px;" width="10" height="26"><text x="0" y="20" font-size="6.6" text-anchor="start" fill="#5c5c5c">18</text></svg>
<div class="a" style="left:16px;top:229.84999999999997px;width:22.4px;height:13.2px;background:#fff;border:0.5px solid #d4d4d4;"></div>
<svg class="a" style="left:6.60px;top:237px;" width="10" height="26"><text x="0" y="20" font-size="6.6" text-anchor="start" fill="#5c5c5c">19</text></svg>
<div class="a" style="left:16px;top:251.5px;width:22.4px;height:13.2px;background:#fff;border:0.5px solid #d4d4d4;"></div>
<svg class="a" style="left:6.60px;top:258px;" width="10" height="26"><text x="0" y="20" font-size="6.6" text-anchor="start" fill="#5c5c5c">20</text></svg>
<div class="a" style="left:16px;top:273.15px;width:22.4px;height:13.2px;background:#fff;border:0.5px solid #d4d4d4;"></div>
<svg class="a" style="left:6.60px;top:280px;" width="10" height="26"><text x="0" y="20" font-size="6.6" text-anchor="start" fill="#5c5c5c">21</text></svg>
<div class="a" style="left:16px;top:294.8px;width:22.4px;height:13.2px;background:#fff;border:0.5px solid #d4d4d4;"></div>
<svg class="a" style="left:6.60px;top:301px;" width="10" height="26"><text x="0" y="20" font-size="6.6" text-anchor="start" fill="#5c5c5c">22</text></svg>
<div class="a" style="left:16px;top:316.45px;width:22.4px;height:13.2px;background:#fff;border:0.5px solid #d4d4d4;"></div>
<svg class="a" style="left:6.60px;top:323px;" width="10" height="26"><text x="0" y="20" font-size="6.6" text-anchor="start" fill="#5c5c5c">23</text></svg>
<div class="a" style="left:16px;top:338.09999999999997px;width:22.4px;height:13.2px;background:#fff;border:0.5px solid #d4d4d4;"></div>
<svg class="a" style="left:6.60px;top:345px;" width="10" height="26"><text x="0" y="20" font-size="6.6" text-anchor="start" fill="#5c5c5c">24</text></svg>
<div class="a" style="left:16px;top:359.75px;width:22.4px;height:13.2px;background:#fff;border:0.5px solid #d4d4d4;"></div>
<svg class="a" style="left:6.60px;top:366px;" width="10" height="26"><text x="0" y="20" font-size="6.6" text-anchor="start" fill="#c0452a">25</text></svg>
<div class="a" style="left:14.6px;top:380.2px;width:25.2px;height:16.2px;background:#fff;border:1.6px solid #d2532f;"></div>
<svg class="a" style="left:6.60px;top:388px;" width="10" height="26"><text x="0" y="20" font-size="6.6" text-anchor="start" fill="#5c5c5c">26</text></svg>
<div class="a" style="left:15.4px;top:402.45px;width:23.6px;height:14.6px;background:#45b1c5;border:1px solid #8f979b;"></div>
<svg class="a" style="left:6.60px;top:410px;" width="10" height="26"><text x="0" y="20" font-size="6.6" text-anchor="start" fill="#5c5c5c">27</text></svg>
<div class="a" style="left:16px;top:424.7px;width:22.4px;height:13.2px;background:#fff;border:0.5px solid #d4d4d4;"></div>
<svg class="a" style="left:6.60px;top:431px;" width="10" height="26"><text x="0" y="20" font-size="6.6" text-anchor="start" fill="#5c5c5c">28</text></svg>
<div class="a" style="left:16px;top:446.34999999999997px;width:22.4px;height:13.2px;background:#fff;border:0.5px solid #d4d4d4;"></div>
<div class="a" style="left:17px;top:79.3px;width:7px;height:1.6px;background:#3a9aa0;"></div>
<div class="a" style="left:19.5px;top:82.3px;width:5px;height:5px;background:#3fb4c4;border-radius:50%;"></div>
<div class="a" style="left:27.5px;top:81.3px;width:1.4px;height:8px;background:#6c7a86;"></div>
<div class="a" style="left:31px;top:82.3px;width:5px;height:0.6px;background:#c9dfe2;"></div>
<div class="a" style="left:31px;top:85.3px;width:5px;height:0.6px;background:#c9dfe2;"></div>
<div class="a" style="left:17px;top:101.35px;width:7px;height:1.6px;background:#3a9aa0;"></div>
<div class="a" style="left:18px;top:106.44999999999999px;width:15px;height:1px;background:#cfe5d8;"></div>
<div class="a" style="left:32px;top:104.44999999999999px;width:1.6px;height:6px;background:#76838e;"></div>
<div class="a" style="left:25px;top:101.94999999999999px;width:9px;height:0.6px;background:#d5d5d5;"></div>
<div class="a" style="left:17.5px;top:122.8px;width:8px;height:1.8px;background:#43a9c0;"></div>
<div class="a" style="left:26px;top:125.6px;width:8px;height:6px;background:#cfe3f2;border-radius:3px;"></div>
<div class="a" style="left:28px;top:126.6px;width:3px;height:4px;background:#8fc0a0;"></div>
<div class="a" style="left:18px;top:126.6px;width:6px;height:0.6px;background:#d8d8d8;"></div>
<div class="a" style="left:18px;top:128.6px;width:6px;height:0.6px;background:#d8d8d8;"></div>
<div class="a" style="left:18px;top:130.6px;width:6px;height:0.6px;background:#d8d8d8;"></div>
<div class="a" style="left:17.5px;top:144.45px;width:8px;height:1.8px;background:#43a9c0;"></div>
<div class="a" style="left:19px;top:147.25px;width:1px;height:7px;background:#9fd0e0;"></div>
<div class="a" style="left:23px;top:148.25px;width:9px;height:0.7px;background:#cfe3f2;"></div>
<div class="a" style="left:23px;top:151.25px;width:9px;height:0.7px;background:#cfe3f2;"></div>
<div class="a" style="left:34px;top:147.25px;width:1.4px;height:6px;background:#8aa;"></div>
<div class="a" style="left:27px;top:144.85px;width:8px;height:0.6px;background:#d5d5d5;"></div>
<div class="a" style="left:28px;top:166.09999999999997px;width:9px;height:1.8px;background:#43a9c0;"></div>
<div class="a" style="left:18.6px;top:168.89999999999998px;width:1.6px;height:7.5px;background:#7c858c;"></div>
<div class="a" style="left:23px;top:170.39999999999998px;width:13px;height:0.6px;background:#cfe6ea;"></div>
<div class="a" style="left:23px;top:172.89999999999998px;width:13px;height:0.6px;background:#cfe6ea;"></div>
<div class="a" style="left:23px;top:175.2px;width:13px;height:0.6px;background:#cfe6ea;"></div>
<div class="a" style="left:28px;top:187.75px;width:9px;height:1.8px;background:#43a9c0;"></div>
<div class="a" style="left:34.5px;top:191.55px;width:1.6px;height:7px;background:#7c858c;"></div>
<div class="a" style="left:19px;top:192.05px;width:13px;height:0.6px;background:#cfe6ea;"></div>
<div class="a" style="left:19px;top:194.55px;width:13px;height:0.6px;background:#cfe6ea;"></div>
<div class="a" style="left:19px;top:196.85000000000002px;width:13px;height:0.6px;background:#cfe6ea;"></div>
<div class="a" style="left:19px;top:210.2px;width:14px;height:0.6px;background:#d2d6da;"></div>
<div class="a" style="left:18px;top:213.2px;width:4px;height:0.6px;background:#cfe0ea;"></div>
<div class="a" style="left:18px;top:215.7px;width:4px;height:0.6px;background:#cfe0ea;"></div>
<div class="a" style="left:28px;top:218.7px;width:8px;height:0.6px;background:#d0d4d8;"></div>
<div class="a" style="left:16.4px;top:232.44999999999996px;width:21.6px;height:8px;background:#2a2322;"></div>
<div class="a" style="left:21px;top:234.84999999999997px;width:10px;height:0.8px;background:#6a5548;"></div>
<div class="a" style="left:30px;top:232.84999999999997px;width:1px;height:5px;background:#4a5a78;"></div>
<div class="a" style="left:18px;top:254.1px;width:9px;height:7.5px;background:#e3eef1;"></div>
<div class="a" style="left:27px;top:254.1px;width:7.5px;height:7.5px;background:#bfe6d2;"></div>
<div class="a" style="left:24px;top:252.7px;width:6px;height:0.7px;background:#9fcfd8;"></div>
<div class="a" style="left:21px;top:262.5px;width:6px;height:0.6px;background:#c8c8c8;"></div>
<div class="a" style="left:18px;top:275.15px;width:8px;height:0.6px;background:#cfcfcf;"></div>
<div class="a" style="left:18px;top:277.15px;width:5px;height:0.6px;background:#dcdcdc;"></div>
<div class="a" style="left:18px;top:279.15px;width:6px;height:3px;background:#eef0f2;"></div>
<div class="a" style="left:27px;top:279.65px;width:8px;height:2.5px;background:#e7ecb0;"></div>
<div class="a" style="left:28px;top:280.15px;width:2px;height:1.5px;background:#f0d64a;"></div>
<div class="a" style="left:18px;top:283.65px;width:6px;height:0.6px;background:#d0d0d0;"></div>
<div class="a" style="left:17px;top:296.2px;width:20px;height:1.4px;background:#d5dae2;"></div>
<div class="a" style="left:24px;top:296.8px;width:5px;height:1px;background:#5a6ea0;"></div>
<div class="a" style="left:18px;top:299.3px;width:7px;height:0.5px;background:#ccc;"></div>
<div class="a" style="left:18px;top:300.8px;width:7px;height:0.5px;background:#ccc;"></div>
<div class="a" style="left:18px;top:302.3px;width:7px;height:0.5px;background:#ccc;"></div>
<div class="a" style="left:28px;top:299.8px;width:8px;height:0.5px;background:#ccc;"></div>
<div class="a" style="left:28px;top:301.8px;width:8px;height:0.5px;background:#ccc;"></div>
<div class="a" style="left:17px;top:305.40000000000003px;width:20px;height:1.3px;background:#c2ccd8;"></div>
<div class="a" style="left:16.4px;top:316.84999999999997px;width:21.6px;height:12.4px;background:#45b1c5;"></div>
<div class="a" style="left:18px;top:319.45px;width:12px;height:0.7px;background:#a9dde6;"></div>
<div class="a" style="left:18px;top:321.95px;width:16px;height:0.7px;background:#8fd0dc;"></div>
<div class="a" style="left:18px;top:324.45px;width:10px;height:0.7px;background:#8fd0dc;"></div>
<div class="a" style="left:18px;top:340.09999999999997px;width:9px;height:0.7px;background:#9fcfd8;"></div>
<div class="a" style="left:18px;top:342.59999999999997px;width:7px;height:0.6px;background:#d0d0d0;"></div>
<div class="a" style="left:16.4px;top:345.9px;width:21.6px;height:5px;background:#45b1c5;"></div>
<div class="a" style="left:34px;top:345.7px;width:2px;height:2px;background:#f0df6a;border-radius:50%;"></div>
<div class="a" style="left:16.4px;top:360.35px;width:21.6px;height:6.4px;background:#d9dde2;"></div>
<div class="a" style="left:18px;top:360.75px;width:3px;height:5.5px;background:#c9a583;"></div>
<div class="a" style="left:24px;top:361.15px;width:5px;height:5px;background:#8fa9c8;"></div>
<div class="a" style="left:31px;top:360.75px;width:4px;height:5.5px;background:#b9c3cf;"></div>
<div class="a" style="left:16.4px;top:366.75px;width:21.6px;height:5.8px;background:#3c9fb2;"></div>
<div class="a" style="left:17.5px;top:367.75px;width:5px;height:3.5px;background:#5d7b58;"></div>
<div class="a" style="left:25px;top:368.75px;width:10px;height:1.6px;background:#2e8194;"></div>
<div class="a" style="left:18.6px;top:386.59999999999997px;width:2.4px;height:3.4px;background:#fff;border:0.5px solid #e5c935;border-radius:0.8px;"></div>
<div class="a" style="left:19.2px;top:384.79999999999995px;width:1.2px;height:1.6px;background:#7a8560;border-radius:50%;"></div>
<div class="a" style="left:21.700000000000003px;top:386.59999999999997px;width:2.4px;height:3.4px;background:#fff;border:0.5px solid #e5c935;border-radius:0.8px;"></div>
<div class="a" style="left:22.3px;top:384.79999999999995px;width:1.2px;height:1.6px;background:#7a8560;border-radius:50%;"></div>
<div class="a" style="left:24.8px;top:386.59999999999997px;width:2.4px;height:3.4px;background:#fff;border:0.5px solid #e5c935;border-radius:0.8px;"></div>
<div class="a" style="left:25.4px;top:384.79999999999995px;width:1.2px;height:1.6px;background:#7a8560;border-radius:50%;"></div>
<div class="a" style="left:27.900000000000002px;top:386.59999999999997px;width:2.4px;height:3.4px;background:#fff;border:0.5px solid #e5c935;border-radius:0.8px;"></div>
<div class="a" style="left:28.5px;top:384.79999999999995px;width:1.2px;height:1.6px;background:#7a8560;border-radius:50%;"></div>
<div class="a" style="left:31.0px;top:386.59999999999997px;width:2.4px;height:3.4px;background:#fff;border:0.5px solid #e5c935;border-radius:0.8px;"></div>
<div class="a" style="left:31.6px;top:384.79999999999995px;width:1.2px;height:1.6px;background:#7a8560;border-radius:50%;"></div>
<div class="a" style="left:34.1px;top:386.59999999999997px;width:2.4px;height:3.4px;background:#fff;border:0.5px solid #e5c935;border-radius:0.8px;"></div>
<div class="a" style="left:34.7px;top:384.79999999999995px;width:1.2px;height:1.6px;background:#7a8560;border-radius:50%;"></div>
<div class="a" style="left:17.6px;top:386.29999999999995px;width:19.5px;height:0.5px;background:#8a8a8a;"></div>
<div class="a" style="left:24px;top:383.4px;width:8px;height:0.8px;background:#6fc0cf;"></div>
<div class="a" style="left:24.5px;top:391.59999999999997px;width:8px;height:1.4px;background:#45b1c5;"></div>
<div class="a" style="left:18px;top:406.05px;width:15px;height:0.9px;background:#a7e0ea;"></div>
<div class="a" style="left:18px;top:408.25px;width:12px;height:0.9px;background:#a7e0ea;"></div>
<div class="a" style="left:18px;top:411.25px;width:5px;height:0.6px;background:#8fd3df;"></div>
<div class="a" style="left:16.2px;top:425.09999999999997px;width:0.8px;height:12.4px;background:#59bdd0;"></div>
<div class="a" style="left:19px;top:430.7px;width:3px;height:0.7px;background:#555;"></div>
<div class="a" style="left:20.5px;top:429.5px;width:3px;height:0.7px;background:#666;"></div>
<div class="a" style="left:24.6px;top:432.3px;width:3.6px;height:3.6px;background:#e0532a;border-radius:1px;"></div>
<div class="a" style="left:25.5px;top:430.3px;width:1.8px;height:1.8px;background:#7a5a48;border-radius:50%;"></div>
<div class="a" style="left:30px;top:430.2px;width:3px;height:2px;background:#9a9a9a;"></div>
<div class="a" style="left:16.2px;top:446.74999999999994px;width:0.8px;height:12.4px;background:#59bdd0;"></div>
<div class="a" style="left:22px;top:448.74999999999994px;width:10px;height:0.7px;background:#8fcfdc;"></div>
<div class="a" style="left:26px;top:453.34999999999997px;width:1.4px;height:4px;background:#8a9aa2;"></div>
<div class="a" style="left:24px;top:455.34999999999997px;width:1.2px;height:2px;background:#a0aab0;"></div>
<div class="a" style="left:141.3px;top:72.2px;width:603px;height:5.8px;background:#fff;"></div>
<div class="a" style="left:148.6px;top:73.9px;width:0.6px;height:2.3px;background:#808080;"></div>
<div class="a" style="left:144.14999999999998px;top:74.6px;width:0.6px;height:0.9px;background:#bcbcbc;"></div>
<div class="a" style="left:153.04999999999998px;top:74.6px;width:0.6px;height:0.9px;background:#bcbcbc;"></div>
<svg class="a" style="left:157.80px;top:57px;" width="10" height="26"><text x="0" y="20" font-size="4.9" text-anchor="middle" fill="#444">16</text></svg>
<div class="a" style="left:166.4px;top:73.9px;width:0.6px;height:2.3px;background:#808080;"></div>
<div class="a" style="left:161.95px;top:74.6px;width:0.6px;height:0.9px;background:#bcbcbc;"></div>
<div class="a" style="left:170.85px;top:74.6px;width:0.6px;height:0.9px;background:#bcbcbc;"></div>
<svg class="a" style="left:175.60px;top:57px;" width="10" height="26"><text x="0" y="20" font-size="4.9" text-anchor="middle" fill="#444">15</text></svg>
<div class="a" style="left:184.20000000000002px;top:73.9px;width:0.6px;height:2.3px;background:#808080;"></div>
<div class="a" style="left:179.75px;top:74.6px;width:0.6px;height:0.9px;background:#bcbcbc;"></div>
<div class="a" style="left:188.65px;top:74.6px;width:0.6px;height:0.9px;background:#bcbcbc;"></div>
<svg class="a" style="left:193.40px;top:57px;" width="10" height="26"><text x="0" y="20" font-size="4.9" text-anchor="middle" fill="#444">14</text></svg>
<div class="a" style="left:202.0px;top:73.9px;width:0.6px;height:2.3px;background:#808080;"></div>
<div class="a" style="left:197.54999999999998px;top:74.6px;width:0.6px;height:0.9px;background:#bcbcbc;"></div>
<div class="a" style="left:206.45px;top:74.6px;width:0.6px;height:0.9px;background:#bcbcbc;"></div>
<svg class="a" style="left:211.20px;top:57px;" width="10" height="26"><text x="0" y="20" font-size="4.9" text-anchor="middle" fill="#444">13</text></svg>
<div class="a" style="left:219.8px;top:73.9px;width:0.6px;height:2.3px;background:#808080;"></div>
<div class="a" style="left:215.35px;top:74.6px;width:0.6px;height:0.9px;background:#bcbcbc;"></div>
<div class="a" style="left:224.25px;top:74.6px;width:0.6px;height:0.9px;background:#bcbcbc;"></div>
<svg class="a" style="left:229.00px;top:57px;" width="10" height="26"><text x="0" y="20" font-size="4.9" text-anchor="middle" fill="#444">12</text></svg>
<div class="a" style="left:237.6px;top:73.9px;width:0.6px;height:2.3px;background:#808080;"></div>
<div class="a" style="left:233.14999999999998px;top:74.6px;width:0.6px;height:0.9px;background:#bcbcbc;"></div>
<div class="a" style="left:242.04999999999998px;top:74.6px;width:0.6px;height:0.9px;background:#bcbcbc;"></div>
<svg class="a" style="left:246.80px;top:57px;" width="10" height="26"><text x="0" y="20" font-size="4.9" text-anchor="middle" fill="#444">11</text></svg>
<div class="a" style="left:255.4px;top:73.9px;width:0.6px;height:2.3px;background:#808080;"></div>
<div class="a" style="left:250.95px;top:74.6px;width:0.6px;height:0.9px;background:#bcbcbc;"></div>
<div class="a" style="left:259.85px;top:74.6px;width:0.6px;height:0.9px;background:#bcbcbc;"></div>
<svg class="a" style="left:264.60px;top:57px;" width="10" height="26"><text x="0" y="20" font-size="4.9" text-anchor="middle" fill="#444">10</text></svg>
<div class="a" style="left:273.2px;top:73.9px;width:0.6px;height:2.3px;background:#808080;"></div>
<div class="a" style="left:268.75px;top:74.6px;width:0.6px;height:0.9px;background:#bcbcbc;"></div>
<div class="a" style="left:277.65000000000003px;top:74.6px;width:0.6px;height:0.9px;background:#bcbcbc;"></div>
<svg class="a" style="left:282.40px;top:57px;" width="10" height="26"><text x="0" y="20" font-size="4.9" text-anchor="middle" fill="#444">9</text></svg>
<div class="a" style="left:290.99999999999994px;top:73.9px;width:0.6px;height:2.3px;background:#808080;"></div>
<div class="a" style="left:286.54999999999995px;top:74.6px;width:0.6px;height:0.9px;background:#bcbcbc;"></div>
<div class="a" style="left:295.45px;top:74.6px;width:0.6px;height:0.9px;background:#bcbcbc;"></div>
<svg class="a" style="left:300.20px;top:57px;" width="10" height="26"><text x="0" y="20" font-size="4.9" text-anchor="middle" fill="#444">8</text></svg>
<div class="a" style="left:308.8px;top:73.9px;width:0.6px;height:2.3px;background:#808080;"></div>
<div class="a" style="left:304.35px;top:74.6px;width:0.6px;height:0.9px;background:#bcbcbc;"></div>
<div class="a" style="left:313.25000000000006px;top:74.6px;width:0.6px;height:0.9px;background:#bcbcbc;"></div>
<svg class="a" style="left:318.00px;top:57px;" width="10" height="26"><text x="0" y="20" font-size="4.9" text-anchor="middle" fill="#444">7</text></svg>
<div class="a" style="left:326.59999999999997px;top:73.9px;width:0.6px;height:2.3px;background:#808080;"></div>
<div class="a" style="left:322.15px;top:74.6px;width:0.6px;height:0.9px;background:#bcbcbc;"></div>
<div class="a" style="left:331.05px;top:74.6px;width:0.6px;height:0.9px;background:#bcbcbc;"></div>
<svg class="a" style="left:335.80px;top:57px;" width="10" height="26"><text x="0" y="20" font-size="4.9" text-anchor="middle" fill="#444">6</text></svg>
<div class="a" style="left:344.4px;top:73.9px;width:0.6px;height:2.3px;background:#808080;"></div>
<div class="a" style="left:339.95px;top:74.6px;width:0.6px;height:0.9px;background:#bcbcbc;"></div>
<div class="a" style="left:348.85px;top:74.6px;width:0.6px;height:0.9px;background:#bcbcbc;"></div>
<svg class="a" style="left:353.60px;top:57px;" width="10" height="26"><text x="0" y="20" font-size="4.9" text-anchor="middle" fill="#444">5</text></svg>
<div class="a" style="left:362.2px;top:73.9px;width:0.6px;height:2.3px;background:#808080;"></div>
<div class="a" style="left:357.75px;top:74.6px;width:0.6px;height:0.9px;background:#bcbcbc;"></div>
<div class="a" style="left:366.65000000000003px;top:74.6px;width:0.6px;height:0.9px;background:#bcbcbc;"></div>
<svg class="a" style="left:371.40px;top:57px;" width="10" height="26"><text x="0" y="20" font-size="4.9" text-anchor="middle" fill="#444">4</text></svg>
<div class="a" style="left:380.0px;top:73.9px;width:0.6px;height:2.3px;background:#808080;"></div>
<div class="a" style="left:375.55px;top:74.6px;width:0.6px;height:0.9px;background:#bcbcbc;"></div>
<div class="a" style="left:384.45000000000005px;top:74.6px;width:0.6px;height:0.9px;background:#bcbcbc;"></div>
<svg class="a" style="left:389.20px;top:57px;" width="10" height="26"><text x="0" y="20" font-size="4.9" text-anchor="middle" fill="#444">3</text></svg>
<div class="a" style="left:397.8px;top:73.9px;width:0.6px;height:2.3px;background:#808080;"></div>
<div class="a" style="left:393.35px;top:74.6px;width:0.6px;height:0.9px;background:#bcbcbc;"></div>
<div class="a" style="left:402.25000000000006px;top:74.6px;width:0.6px;height:0.9px;background:#bcbcbc;"></div>
<svg class="a" style="left:407.00px;top:57px;" width="10" height="26"><text x="0" y="20" font-size="4.9" text-anchor="middle" fill="#444">2</text></svg>
<div class="a" style="left:415.59999999999997px;top:73.9px;width:0.6px;height:2.3px;background:#808080;"></div>
<div class="a" style="left:411.15px;top:74.6px;width:0.6px;height:0.9px;background:#bcbcbc;"></div>
<div class="a" style="left:420.05px;top:74.6px;width:0.6px;height:0.9px;background:#bcbcbc;"></div>
<svg class="a" style="left:424.80px;top:57px;" width="10" height="26"><text x="0" y="20" font-size="4.9" text-anchor="middle" fill="#444">1</text></svg>
<div class="a" style="left:433.4px;top:73.9px;width:0.6px;height:2.3px;background:#808080;"></div>
<div class="a" style="left:428.95px;top:74.6px;width:0.6px;height:0.9px;background:#bcbcbc;"></div>
<div class="a" style="left:437.85px;top:74.6px;width:0.6px;height:0.9px;background:#bcbcbc;"></div>
<svg class="a" style="left:442.60px;top:57px;" width="10" height="26"><text x="0" y="20" font-size="4.9" text-anchor="middle" fill="#444">0</text></svg>
<div class="a" style="left:451.2px;top:73.9px;width:0.6px;height:2.3px;background:#808080;"></div>
<div class="a" style="left:446.75px;top:74.6px;width:0.6px;height:0.9px;background:#bcbcbc;"></div>
<div class="a" style="left:455.65000000000003px;top:74.6px;width:0.6px;height:0.9px;background:#bcbcbc;"></div>
<svg class="a" style="left:460.40px;top:57px;" width="10" height="26"><text x="0" y="20" font-size="4.9" text-anchor="middle" fill="#444">1</text></svg>
<div class="a" style="left:469.0px;top:73.9px;width:0.6px;height:2.3px;background:#808080;"></div>
<div class="a" style="left:464.55px;top:74.6px;width:0.6px;height:0.9px;background:#bcbcbc;"></div>
<div class="a" style="left:473.45000000000005px;top:74.6px;width:0.6px;height:0.9px;background:#bcbcbc;"></div>
<svg class="a" style="left:478.20px;top:57px;" width="10" height="26"><text x="0" y="20" font-size="4.9" text-anchor="middle" fill="#444">2</text></svg>
<div class="a" style="left:486.8px;top:73.9px;width:0.6px;height:2.3px;background:#808080;"></div>
<div class="a" style="left:482.35px;top:74.6px;width:0.6px;height:0.9px;background:#bcbcbc;"></div>
<div class="a" style="left:491.25000000000006px;top:74.6px;width:0.6px;height:0.9px;background:#bcbcbc;"></div>
<svg class="a" style="left:496.00px;top:57px;" width="10" height="26"><text x="0" y="20" font-size="4.9" text-anchor="middle" fill="#444">3</text></svg>
<div class="a" style="left:504.59999999999997px;top:73.9px;width:0.6px;height:2.3px;background:#808080;"></div>
<div class="a" style="left:500.15px;top:74.6px;width:0.6px;height:0.9px;background:#bcbcbc;"></div>
<div class="a" style="left:509.05px;top:74.6px;width:0.6px;height:0.9px;background:#bcbcbc;"></div>
<svg class="a" style="left:513.80px;top:57px;" width="10" height="26"><text x="0" y="20" font-size="4.9" text-anchor="middle" fill="#444">4</text></svg>
<div class="a" style="left:522.4000000000001px;top:73.9px;width:0.6px;height:2.3px;background:#808080;"></div>
<div class="a" style="left:517.9500000000002px;top:74.6px;width:0.6px;height:0.9px;background:#bcbcbc;"></div>
<div class="a" style="left:526.8500000000001px;top:74.6px;width:0.6px;height:0.9px;background:#bcbcbc;"></div>
<svg class="a" style="left:531.60px;top:57px;" width="10" height="26"><text x="0" y="20" font-size="4.9" text-anchor="middle" fill="#444">5</text></svg>
<div class="a" style="left:540.2px;top:73.9px;width:0.6px;height:2.3px;background:#808080;"></div>
<div class="a" style="left:535.7500000000001px;top:74.6px;width:0.6px;height:0.9px;background:#bcbcbc;"></div>
<div class="a" style="left:544.6500000000001px;top:74.6px;width:0.6px;height:0.9px;background:#bcbcbc;"></div>
<svg class="a" style="left:549.40px;top:57px;" width="10" height="26"><text x="0" y="20" font-size="4.9" text-anchor="middle" fill="#444">6</text></svg>
<div class="a" style="left:558.0000000000001px;top:73.9px;width:0.6px;height:2.3px;background:#808080;"></div>
<div class="a" style="left:553.5500000000002px;top:74.6px;width:0.6px;height:0.9px;background:#bcbcbc;"></div>
<div class="a" style="left:562.4500000000002px;top:74.6px;width:0.6px;height:0.9px;background:#bcbcbc;"></div>
<svg class="a" style="left:567.20px;top:57px;" width="10" height="26"><text x="0" y="20" font-size="4.9" text-anchor="middle" fill="#444">7</text></svg>
<div class="a" style="left:575.8000000000001px;top:73.9px;width:0.6px;height:2.3px;background:#808080;"></div>
<div class="a" style="left:571.3500000000001px;top:74.6px;width:0.6px;height:0.9px;background:#bcbcbc;"></div>
<div class="a" style="left:580.2500000000001px;top:74.6px;width:0.6px;height:0.9px;background:#bcbcbc;"></div>
<svg class="a" style="left:585.00px;top:57px;" width="10" height="26"><text x="0" y="20" font-size="4.9" text-anchor="middle" fill="#444">8</text></svg>
<div class="a" style="left:593.6px;top:73.9px;width:0.6px;height:2.3px;background:#808080;"></div>
<div class="a" style="left:589.1500000000001px;top:74.6px;width:0.6px;height:0.9px;background:#bcbcbc;"></div>
<div class="a" style="left:598.0500000000001px;top:74.6px;width:0.6px;height:0.9px;background:#bcbcbc;"></div>
<svg class="a" style="left:602.80px;top:57px;" width="10" height="26"><text x="0" y="20" font-size="4.9" text-anchor="middle" fill="#444">9</text></svg>
<div class="a" style="left:611.4000000000001px;top:73.9px;width:0.6px;height:2.3px;background:#808080;"></div>
<div class="a" style="left:606.9500000000002px;top:74.6px;width:0.6px;height:0.9px;background:#bcbcbc;"></div>
<div class="a" style="left:615.8500000000001px;top:74.6px;width:0.6px;height:0.9px;background:#bcbcbc;"></div>
<svg class="a" style="left:620.60px;top:57px;" width="10" height="26"><text x="0" y="20" font-size="4.9" text-anchor="middle" fill="#444">10</text></svg>
<div class="a" style="left:629.2px;top:73.9px;width:0.6px;height:2.3px;background:#808080;"></div>
<div class="a" style="left:624.7500000000001px;top:74.6px;width:0.6px;height:0.9px;background:#bcbcbc;"></div>
<div class="a" style="left:633.6500000000001px;top:74.6px;width:0.6px;height:0.9px;background:#bcbcbc;"></div>
<svg class="a" style="left:638.40px;top:57px;" width="10" height="26"><text x="0" y="20" font-size="4.9" text-anchor="middle" fill="#444">11</text></svg>
<div class="a" style="left:647.0000000000001px;top:73.9px;width:0.6px;height:2.3px;background:#808080;"></div>
<div class="a" style="left:642.5500000000002px;top:74.6px;width:0.6px;height:0.9px;background:#bcbcbc;"></div>
<div class="a" style="left:651.4500000000002px;top:74.6px;width:0.6px;height:0.9px;background:#bcbcbc;"></div>
<svg class="a" style="left:656.20px;top:57px;" width="10" height="26"><text x="0" y="20" font-size="4.9" text-anchor="middle" fill="#444">12</text></svg>
<div class="a" style="left:664.8000000000001px;top:73.9px;width:0.6px;height:2.3px;background:#808080;"></div>
<div class="a" style="left:660.3500000000001px;top:74.6px;width:0.6px;height:0.9px;background:#bcbcbc;"></div>
<div class="a" style="left:669.2500000000001px;top:74.6px;width:0.6px;height:0.9px;background:#bcbcbc;"></div>
<svg class="a" style="left:674.00px;top:57px;" width="10" height="26"><text x="0" y="20" font-size="4.9" text-anchor="middle" fill="#444">13</text></svg>
<div class="a" style="left:682.6px;top:73.9px;width:0.6px;height:2.3px;background:#808080;"></div>
<div class="a" style="left:678.1500000000001px;top:74.6px;width:0.6px;height:0.9px;background:#bcbcbc;"></div>
<div class="a" style="left:687.0500000000001px;top:74.6px;width:0.6px;height:0.9px;background:#bcbcbc;"></div>
<svg class="a" style="left:691.80px;top:57px;" width="10" height="26"><text x="0" y="20" font-size="4.9" text-anchor="middle" fill="#444">14</text></svg>
<div class="a" style="left:700.4000000000001px;top:73.9px;width:0.6px;height:2.3px;background:#808080;"></div>
<div class="a" style="left:695.9500000000002px;top:74.6px;width:0.6px;height:0.9px;background:#bcbcbc;"></div>
<div class="a" style="left:704.8500000000001px;top:74.6px;width:0.6px;height:0.9px;background:#bcbcbc;"></div>
<svg class="a" style="left:709.60px;top:57px;" width="10" height="26"><text x="0" y="20" font-size="4.9" text-anchor="middle" fill="#444">15</text></svg>
<div class="a" style="left:718.2px;top:73.9px;width:0.6px;height:2.3px;background:#808080;"></div>
<div class="a" style="left:713.7500000000001px;top:74.6px;width:0.6px;height:0.9px;background:#bcbcbc;"></div>
<div class="a" style="left:722.6500000000001px;top:74.6px;width:0.6px;height:0.9px;background:#bcbcbc;"></div>
<svg class="a" style="left:727.40px;top:57px;" width="10" height="26"><text x="0" y="20" font-size="4.9" text-anchor="middle" fill="#444">16</text></svg>
<div class="a" style="left:736.0000000000001px;top:73.9px;width:0.6px;height:2.3px;background:#808080;"></div>
<div class="a" style="left:731.5500000000002px;top:74.6px;width:0.6px;height:0.9px;background:#bcbcbc;"></div>
<div class="a" style="left:740.4500000000002px;top:74.6px;width:0.6px;height:0.9px;background:#bcbcbc;"></div>
<div class="a" style="left:58.6px;top:88.8px;width:5.4px;height:339px;background:#fff;"></div>
<svg class="a" style="left:61px;top:98.10px" width="4" height="4"><text x="0" y="0" font-size="4.9" fill="#444" text-anchor="middle" transform="rotate(-90) translate(0,1.8)">9</text></svg>
<div class="a" style="left:60.15px;top:106.7px;width:2.3px;height:0.6px;background:#808080;"></div>
<div class="a" style="left:60.849999999999994px;top:102.25px;width:0.9px;height:0.6px;background:#bcbcbc;"></div>
<div class="a" style="left:60.849999999999994px;top:111.14999999999999px;width:0.9px;height:0.6px;background:#bcbcbc;"></div>
<svg class="a" style="left:61px;top:115.90px" width="4" height="4"><text x="0" y="0" font-size="4.9" fill="#444" text-anchor="middle" transform="rotate(-90) translate(0,1.8)">8</text></svg>
<div class="a" style="left:60.15px;top:124.50000000000001px;width:2.3px;height:0.6px;background:#808080;"></div>
<div class="a" style="left:60.849999999999994px;top:120.05000000000001px;width:0.9px;height:0.6px;background:#bcbcbc;"></div>
<div class="a" style="left:60.849999999999994px;top:128.95px;width:0.9px;height:0.6px;background:#bcbcbc;"></div>
<svg class="a" style="left:61px;top:133.70px" width="4" height="4"><text x="0" y="0" font-size="4.9" fill="#444" text-anchor="middle" transform="rotate(-90) translate(0,1.8)">7</text></svg>
<div class="a" style="left:60.15px;top:142.29999999999998px;width:2.3px;height:0.6px;background:#808080;"></div>
<div class="a" style="left:60.849999999999994px;top:137.84999999999997px;width:0.9px;height:0.6px;background:#bcbcbc;"></div>
<div class="a" style="left:60.849999999999994px;top:146.74999999999997px;width:0.9px;height:0.6px;background:#bcbcbc;"></div>
<svg class="a" style="left:61px;top:151.50px" width="4" height="4"><text x="0" y="0" font-size="4.9" fill="#444" text-anchor="middle" transform="rotate(-90) translate(0,1.8)">6</text></svg>
<div class="a" style="left:60.15px;top:160.1px;width:2.3px;height:0.6px;background:#808080;"></div>
<div class="a" style="left:60.849999999999994px;top:155.64999999999998px;width:0.9px;height:0.6px;background:#bcbcbc;"></div>
<div class="a" style="left:60.849999999999994px;top:164.54999999999998px;width:0.9px;height:0.6px;background:#bcbcbc;"></div>
<svg class="a" style="left:61px;top:169.30px" width="4" height="4"><text x="0" y="0" font-size="4.9" fill="#444" text-anchor="middle" transform="rotate(-90) translate(0,1.8)">5</text></svg>
<div class="a" style="left:60.15px;top:177.9px;width:2.3px;height:0.6px;background:#808080;"></div>
<div class="a" style="left:60.849999999999994px;top:173.45px;width:0.9px;height:0.6px;background:#bcbcbc;"></div>
<div class="a" style="left:60.849999999999994px;top:182.35px;width:0.9px;height:0.6px;background:#bcbcbc;"></div>
<svg class="a" style="left:61px;top:187.10px" width="4" height="4"><text x="0" y="0" font-size="4.9" fill="#444" text-anchor="middle" transform="rotate(-90) translate(0,1.8)">4</text></svg>
<div class="a" style="left:60.15px;top:195.70000000000002px;width:2.3px;height:0.6px;background:#808080;"></div>
<div class="a" style="left:60.849999999999994px;top:191.25px;width:0.9px;height:0.6px;background:#bcbcbc;"></div>
<div class="a" style="left:60.849999999999994px;top:200.15px;width:0.9px;height:0.6px;background:#bcbcbc;"></div>
<svg class="a" style="left:61px;top:204.90px" width="4" height="4"><text x="0" y="0" font-size="4.9" fill="#444" text-anchor="middle" transform="rotate(-90) translate(0,1.8)">3</text></svg>
<div class="a" style="left:60.15px;top:213.5px;width:2.3px;height:0.6px;background:#808080;"></div>
<div class="a" style="left:60.849999999999994px;top:209.04999999999998px;width:0.9px;height:0.6px;background:#bcbcbc;"></div>
<div class="a" style="left:60.849999999999994px;top:217.95px;width:0.9px;height:0.6px;background:#bcbcbc;"></div>
<svg class="a" style="left:61px;top:222.70px" width="4" height="4"><text x="0" y="0" font-size="4.9" fill="#444" text-anchor="middle" transform="rotate(-90) translate(0,1.8)">2</text></svg>
<div class="a" style="left:60.15px;top:231.3px;width:2.3px;height:0.6px;background:#808080;"></div>
<div class="a" style="left:60.849999999999994px;top:226.85px;width:0.9px;height:0.6px;background:#bcbcbc;"></div>
<div class="a" style="left:60.849999999999994px;top:235.75px;width:0.9px;height:0.6px;background:#bcbcbc;"></div>
<svg class="a" style="left:61px;top:240.50px" width="4" height="4"><text x="0" y="0" font-size="4.9" fill="#444" text-anchor="middle" transform="rotate(-90) translate(0,1.8)">1</text></svg>
<div class="a" style="left:60.15px;top:249.1px;width:2.3px;height:0.6px;background:#808080;"></div>
<div class="a" style="left:60.849999999999994px;top:244.64999999999998px;width:0.9px;height:0.6px;background:#bcbcbc;"></div>
<div class="a" style="left:60.849999999999994px;top:253.54999999999998px;width:0.9px;height:0.6px;background:#bcbcbc;"></div>
<svg class="a" style="left:61px;top:258.30px" width="4" height="4"><text x="0" y="0" font-size="4.9" fill="#444" text-anchor="middle" transform="rotate(-90) translate(0,1.8)">0</text></svg>
<div class="a" style="left:60.15px;top:266.9px;width:2.3px;height:0.6px;background:#808080;"></div>
<div class="a" style="left:60.849999999999994px;top:262.45px;width:0.9px;height:0.6px;background:#bcbcbc;"></div>
<div class="a" style="left:60.849999999999994px;top:271.35px;width:0.9px;height:0.6px;background:#bcbcbc;"></div>
<svg class="a" style="left:61px;top:276.10px" width="4" height="4"><text x="0" y="0" font-size="4.9" fill="#444" text-anchor="middle" transform="rotate(-90) translate(0,1.8)">1</text></svg>
<div class="a" style="left:60.15px;top:284.7px;width:2.3px;height:0.6px;background:#808080;"></div>
<div class="a" style="left:60.849999999999994px;top:280.25px;width:0.9px;height:0.6px;background:#bcbcbc;"></div>
<div class="a" style="left:60.849999999999994px;top:289.15000000000003px;width:0.9px;height:0.6px;background:#bcbcbc;"></div>
<svg class="a" style="left:61px;top:293.90px" width="4" height="4"><text x="0" y="0" font-size="4.9" fill="#444" text-anchor="middle" transform="rotate(-90) translate(0,1.8)">2</text></svg>
<div class="a" style="left:60.15px;top:302.5px;width:2.3px;height:0.6px;background:#808080;"></div>
<div class="a" style="left:60.849999999999994px;top:298.05px;width:0.9px;height:0.6px;background:#bcbcbc;"></div>
<div class="a" style="left:60.849999999999994px;top:306.95000000000005px;width:0.9px;height:0.6px;background:#bcbcbc;"></div>
<svg class="a" style="left:61px;top:311.70px" width="4" height="4"><text x="0" y="0" font-size="4.9" fill="#444" text-anchor="middle" transform="rotate(-90) translate(0,1.8)">3</text></svg>
<div class="a" style="left:60.15px;top:320.3px;width:2.3px;height:0.6px;background:#808080;"></div>
<div class="a" style="left:60.849999999999994px;top:315.85px;width:0.9px;height:0.6px;background:#bcbcbc;"></div>
<div class="a" style="left:60.849999999999994px;top:324.75000000000006px;width:0.9px;height:0.6px;background:#bcbcbc;"></div>
<svg class="a" style="left:61px;top:329.50px" width="4" height="4"><text x="0" y="0" font-size="4.9" fill="#444" text-anchor="middle" transform="rotate(-90) translate(0,1.8)">4</text></svg>
<div class="a" style="left:60.15px;top:338.09999999999997px;width:2.3px;height:0.6px;background:#808080;"></div>
<div class="a" style="left:60.849999999999994px;top:333.65px;width:0.9px;height:0.6px;background:#bcbcbc;"></div>
<div class="a" style="left:60.849999999999994px;top:342.55px;width:0.9px;height:0.6px;background:#bcbcbc;"></div>
<svg class="a" style="left:61px;top:347.30px" width="4" height="4"><text x="0" y="0" font-size="4.9" fill="#444" text-anchor="middle" transform="rotate(-90) translate(0,1.8)">5</text></svg>
<div class="a" style="left:60.15px;top:355.9px;width:2.3px;height:0.6px;background:#808080;"></div>
<div class="a" style="left:60.849999999999994px;top:351.45px;width:0.9px;height:0.6px;background:#bcbcbc;"></div>
<div class="a" style="left:60.849999999999994px;top:360.35px;width:0.9px;height:0.6px;background:#bcbcbc;"></div>
<svg class="a" style="left:61px;top:365.10px" width="4" height="4"><text x="0" y="0" font-size="4.9" fill="#444" text-anchor="middle" transform="rotate(-90) translate(0,1.8)">6</text></svg>
<div class="a" style="left:60.15px;top:373.7px;width:2.3px;height:0.6px;background:#808080;"></div>
<div class="a" style="left:60.849999999999994px;top:369.25px;width:0.9px;height:0.6px;background:#bcbcbc;"></div>
<div class="a" style="left:60.849999999999994px;top:378.15000000000003px;width:0.9px;height:0.6px;background:#bcbcbc;"></div>
<svg class="a" style="left:61px;top:382.90px" width="4" height="4"><text x="0" y="0" font-size="4.9" fill="#444" text-anchor="middle" transform="rotate(-90) translate(0,1.8)">7</text></svg>
<div class="a" style="left:60.15px;top:391.5px;width:2.3px;height:0.6px;background:#808080;"></div>
<div class="a" style="left:60.849999999999994px;top:387.05px;width:0.9px;height:0.6px;background:#bcbcbc;"></div>
<div class="a" style="left:60.849999999999994px;top:395.95000000000005px;width:0.9px;height:0.6px;background:#bcbcbc;"></div>
<svg class="a" style="left:61px;top:400.70px" width="4" height="4"><text x="0" y="0" font-size="4.9" fill="#444" text-anchor="middle" transform="rotate(-90) translate(0,1.8)">8</text></svg>
<div class="a" style="left:60.15px;top:409.3px;width:2.3px;height:0.6px;background:#808080;"></div>
<div class="a" style="left:60.849999999999994px;top:404.85px;width:0.9px;height:0.6px;background:#bcbcbc;"></div>
<div class="a" style="left:60.849999999999994px;top:413.75000000000006px;width:0.9px;height:0.6px;background:#bcbcbc;"></div>
<svg class="a" style="left:61px;top:418.50px" width="4" height="4"><text x="0" y="0" font-size="4.9" fill="#444" text-anchor="middle" transform="rotate(-90) translate(0,1.8)">9</text></svg>
<div class="a" style="left:60.849999999999994px;top:422.65px;width:0.9px;height:0.6px;background:#bcbcbc;"></div>
<div class="a" style="left:816.8px;top:71px;width:7.2px;height:340px;background:#dadada;"></div>
<div class="a" style="left:817.3px;top:72.3px;width:6.2px;height:5.4px;background:#fff;border:0.5px solid #bdbdbd;"></div>
<svg class="a" style="left:819.200px;top:74.300px" width="2.400" height="1.400" viewBox="0 0 2.400 1.400"><path d="M0 1.400h2.400l-1.200-1.400z" fill="#555"/></svg>
<div class="a" style="left:817.2px;top:331.3px;width:6.3px;height:10.4px;background:#fff;border:0.5px solid #c4c4c4;"></div>
<div class="a" style="left:817.3px;top:404.9px;width:6.2px;height:5.9px;background:#fff;border:0.5px solid #c8c8c8;"></div>
<svg class="a" style="left:819.1999999999999px;top:407.4px" width="2.4" height="1.4" viewBox="0 0 2.4 1.4"><path d="M0 0h2.4l-1.2 1.4z" fill="#555"/></svg>
<svg class="a" style="left:819px;top:413px" width="3" height="12" viewBox="0 0 3 12" fill="none" stroke="#555" stroke-width="0.500"><path d="M0.300 2l1.200-1.200l1.200 1.200M0.300 3.400l1.200-1.200l1.200 1.200M0.300 8l1.200 1.200l1.200-1.200M0.300 9.400l1.200 1.200l1.200-1.200"/></svg>
<div class="a" style="left:141.3px;top:88.7px;width:603px;height:339px;background:#fff;"></div>
<svg class="a" style="left:0;top:0" width="1024" height="470" viewBox="0 0 1024 470"><path d="M157.80 89V427.5" stroke="#a6a6a6" stroke-width="0.7" stroke-dasharray="0.9 2.8" fill="none"/><path d="M193.40 89V427.5" stroke="#a6a6a6" stroke-width="0.7" stroke-dasharray="0.9 2.8" fill="none"/><path d="M229.00 89V427.5" stroke="#a6a6a6" stroke-width="0.7" stroke-dasharray="0.9 2.8" fill="none"/><path d="M264.60 89V427.5" stroke="#a6a6a6" stroke-width="0.7" stroke-dasharray="0.9 2.8" fill="none"/><path d="M300.20 89V427.5" stroke="#a6a6a6" stroke-width="0.7" stroke-dasharray="0.9 2.8" fill="none"/><path d="M335.80 89V427.5" stroke="#a6a6a6" stroke-width="0.7" stroke-dasharray="0.9 2.8" fill="none"/><path d="M371.40 89V427.5" stroke="#a6a6a6" stroke-width="0.7" stroke-dasharray="0.9 2.8" fill="none"/><path d="M407.00 89V427.5" stroke="#a6a6a6" stroke-width="0.7" stroke-dasharray="0.9 2.8" fill="none"/><path d="M442.60 89V427.5" stroke="#a6a6a6" stroke-width="0.7" stroke-dasharray="0.9 2.8" fill="none"/><path d="M478.20 89V427.5" stroke="#a6a6a6" stroke-width="0.7" stroke-dasharray="0.9 2.8" fill="none"/><path d="M513.80 89V427.5" stroke="#a6a6a6" stroke-width="0.7" stroke-dasharray="0.9 2.8" fill="none"/><path d="M549.40 89V427.5" stroke="#a6a6a6" stroke-width="0.7" stroke-dasharray="0.9 2.8" fill="none"/><path d="M585.00 89V427.5" stroke="#a6a6a6" stroke-width="0.7" stroke-dasharray="0.9 2.8" fill="none"/><path d="M620.60 89V427.5" stroke="#a6a6a6" stroke-width="0.7" stroke-dasharray="0.9 2.8" fill="none"/><path d="M656.20 89V427.5" stroke="#a6a6a6" stroke-width="0.7" stroke-dasharray="0.9 2.8" fill="none"/><path d="M691.80 89V427.5" stroke="#a6a6a6" stroke-width="0.7" stroke-dasharray="0.9 2.8" fill="none"/><path d="M727.40 89V427.5" stroke="#a6a6a6" stroke-width="0.7" stroke-dasharray="0.9 2.8" fill="none"/><path d="M141.5 115.90H744" stroke="#a6a6a6" stroke-width="0.7" stroke-dasharray="0.9 2.8" fill="none"/><path d="M141.5 151.50H744" stroke="#a6a6a6" stroke-width="0.7" stroke-dasharray="0.9 2.8" fill="none"/><path d="M141.5 187.10H744" stroke="#a6a6a6" stroke-width="0.7" stroke-dasharray="0.9 2.8" fill="none"/><path d="M141.5 222.70H744" stroke="#a6a6a6" stroke-width="0.7" stroke-dasharray="0.9 2.8" fill="none"/><path d="M141.5 258.30H744" stroke="#a6a6a6" stroke-width="0.7" stroke-dasharray="0.9 2.8" fill="none"/><path d="M141.5 293.90H744" stroke="#a6a6a6" stroke-width="0.7" stroke-dasharray="0.9 2.8" fill="none"/><path d="M141.5 329.50H744" stroke="#a6a6a6" stroke-width="0.7" stroke-dasharray="0.9 2.8" fill="none"/><path d="M141.5 365.10H744" stroke="#a6a6a6" stroke-width="0.7" stroke-dasharray="0.9 2.8" fill="none"/><path d="M141.5 400.70H744" stroke="#a6a6a6" stroke-width="0.7" stroke-dasharray="0.9 2.8" fill="none"/><path d="M440.4 82V427.5" stroke="#a8a8a8" stroke-width="0.6" stroke-dasharray="1 1.2" fill="none"/><path d="M67 258.30H816" stroke="#a8a8a8" stroke-width="0.6" stroke-dasharray="1 1.2" fill="none"/></svg>
<div class="a" style="left:56.3px;top:434.6px;width:767.4px;height:0.8px;background:#c6c6c6;"></div>
<svg class="a" style="left:60.40px;top:424px;" width="10" height="26"><text x="0" y="20" font-size="6.4" text-anchor="start" textLength="49.70" lengthAdjust="spacingAndGlyphs" fill="#444">Заметки к слайду</text></svg>
<div class="a" style="left:4px;top:457px;width:819.7px;height:9.1px;background:#f0f0f1;border-top:0.6px solid #d4d4d4;"></div>
<svg class="a" style="left:7.40px;top:443px;" width="10" height="26"><text x="0" y="20" font-size="5" text-anchor="start" textLength="32.40" lengthAdjust="spacingAndGlyphs" fill="#4a4a4a">Слайд 25 из 31</text></svg>
<svg class="a" style="left:61.90px;top:443px;" width="10" height="26"><text x="0" y="20" font-size="5" text-anchor="start" textLength="18.10" lengthAdjust="spacingAndGlyphs" fill="#4a4a4a">русский</text></svg>
<svg class="a" style="left:599.50px;top:443px;" width="10" height="26"><text x="0" y="20" font-size="4.8" text-anchor="start" textLength="19.00" lengthAdjust="spacingAndGlyphs" fill="#4a4a4a">Заметки</text></svg>
<svg class="a" style="left:635.10px;top:443px;" width="10" height="26"><text x="0" y="20" font-size="4.8" text-anchor="start" textLength="29.00" lengthAdjust="spacingAndGlyphs" fill="#4a4a4a">Примечания</text></svg>
<svg class="a" style="left:798.10px;top:443px;" width="10" height="26"><text x="0" y="20" font-size="4.8" text-anchor="start" textLength="10.50" lengthAdjust="spacingAndGlyphs" fill="#4a4a4a">111%</text></svg>
<div class="a" style="left:672px;top:457.6px;width:16px;height:8.4px;background:#d2d2d2;"></div>
<div class="a" style="left:743.8px;top:461.4px;width:42.2px;height:0.6px;background:#8a8a8a;"></div>
<div class="a" style="left:765.1px;top:459.2px;width:1px;height:5px;background:#4a4a4a;"></div>
<svg class="a" style="left:0;top:440px" width="1024" height="30" viewBox="0 440 1024 30" fill="none" stroke="#5a5a5a" stroke-width="0.6"><path d="M738.8 461.7h2.4M788.2 461.7h2.4M789.4 460.5v2.400"/><rect x="49" y="459.400" width="3" height="4" /><path d="M52 460.600h2.600v3.600h-4" /><path d="M53 462l0.600 0.800l1.200-1.600" stroke-width="0.500"/><path d="M593.400 463.200h4M595.400 459.600v2.400M594.200 462l1.200 1.200l1.200-1.200" stroke-width="0.500"/><path d="M628.400 459.600h4v3h-2l-1 1v-1h-1z" fill="#5a5a5a" stroke="none"/><rect x="677.400" y="459.600" width="5.600" height="4.400"/><path d="M679.200 459.600v4.400M677.400 461h1.800"/><path d="M693.400 460h2v1.400h-2zM697.400 460h2v1.400h-2zM693.400 462.600h2v1.400h-2zM697.400 462.600h2v1.400h-2z" stroke-width="0.500"/><rect x="710" y="459.600" width="5" height="4.400"/><path d="M712.500 459.600v4.400M710 461.600h5"/><path d="M725.600 459.600h5.800M726.200 459.600v3h4.600v-3M728.500 462.600v1.600M727.200 464.400h2.600"/><rect x="815.400" y="459.200" width="5.400" height="5.200"/><path d="M816.600 461.400l1.400-1.400M819.600 462.200l-1.400 1.400" stroke-width="0.500"/></svg>
<div class="a" style="left:27px;top:424.6px;width:73.4px;height:7.8px;background:#fff;border:0.5px solid #c4c4c4;"></div>
<svg class="a" style="left:28.40px;top:410px;" width="10" height="26"><text x="0" y="20" font-size="5.7" text-anchor="start" textLength="70.60" lengthAdjust="spacingAndGlyphs" fill="#5a5a5a">Можливості державної служ...</text></svg>
<svg class="a" style="left:26px;top:415.400px" width="7" height="10" viewBox="0 0 7 10"><path d="M0.500 0.400v7.400l1.700-1.600l1.200 2.800l1.200-0.500l-1.200-2.700h2.400z" fill="#fff" stroke="#222" stroke-width="0.600"/></svg>
<svg class="a" style="left:0;top:0" width="1024" height="470" viewBox="0 0 1024 470"><defs><filter id="sh" x="-30%" y="-30%" width="160%" height="160%"><feDropShadow dx="1" dy="1" stdDeviation="0.9" flood-color="#000" flood-opacity="0.35"/></filter></defs><path d="M169.500 220.900H709" fill="none" stroke="#7f7d80" stroke-width="7"/><path d="M706 220.900H708C721 220.900 730.600 231 730.800 245L732.800 346C733 362 723 373.100 709 373.100H707" fill="none" stroke="#7f7d80" stroke-width="6.300"/><path d="M708 373.100H551" fill="none" stroke="#7f7d80" stroke-width="5.600"/><g filter="url(#sh)"><circle cx="307.30" cy="107.20" r="3.8" fill="#4fb0c6"/><circle cx="307.30" cy="116.80" r="3.8" fill="#4fb0c6"/><circle cx="307.30" cy="126.40" r="3.8" fill="#4fb0c6"/><circle cx="307.30" cy="136.00" r="3.8" fill="#4fb0c6"/><circle cx="307.30" cy="145.60" r="3.8" fill="#4fb0c6"/><circle cx="316.85" cy="116.80" r="3.8" fill="#4fb0c6"/><circle cx="316.85" cy="126.40" r="3.8" fill="#4fb0c6"/><circle cx="316.85" cy="136.00" r="3.8" fill="#4fb0c6"/><circle cx="326.40" cy="126.40" r="3.8" fill="#4fb0c6"/></g><g filter="url(#sh)"><path d="M208.9 215.4C205.4 208 191.3 199 191.3 186.2A17.6 17.6 0 1 1 226.5 186.2C226.5 199 212.4 208 208.9 215.4Z" fill="#7b845f"/></g><circle cx="208.9" cy="185.6" r="13.6" fill="#fff"/><circle cx="208.9" cy="221" r="4.8" fill="#fff" stroke="#7b845f" stroke-width="3"/><text x="208.9" y="193" text-anchor="middle" font-family="Liberation Sans" font-weight="bold" font-size="16.8" fill="#1f4e8c">1</text><g filter="url(#sh)"><path d="M294.4 215.4C290.9 208 276.79999999999995 199 276.79999999999995 186.2A17.6 17.6 0 1 1 312.0 186.2C312.0 199 297.9 208 294.4 215.4Z" fill="#7b845f"/></g><circle cx="294.4" cy="185.6" r="13.6" fill="#fff"/><circle cx="294.4" cy="221" r="4.8" fill="#fff" stroke="#7b845f" stroke-width="3"/><text x="294.4" y="193" text-anchor="middle" font-family="Liberation Sans" font-weight="bold" font-size="16.8" fill="#1f4e8c">2</text><g filter="url(#sh)"><path d="M380 215.4C376.5 208 362.4 199 362.4 186.2A17.6 17.6 0 1 1 397.6 186.2C397.6 199 383.5 208 380 215.4Z" fill="#7b845f"/></g><circle cx="380" cy="185.6" r="13.6" fill="#fff"/><circle cx="380" cy="221" r="4.8" fill="#fff" stroke="#7b845f" stroke-width="3"/><text x="380" y="193" text-anchor="middle" font-family="Liberation Sans" font-weight="bold" font-size="16.8" fill="#1f4e8c">3</text><g filter="url(#sh)"><path d="M464.6 215.4C461.1 208 447.0 199 447.0 186.2A17.6 17.6 0 1 1 482.20000000000005 186.2C482.20000000000005 199 468.1 208 464.6 215.4Z" fill="#7b845f"/></g><circle cx="464.6" cy="185.6" r="13.6" fill="#fff"/><circle cx="464.6" cy="221" r="4.8" fill="#fff" stroke="#7b845f" stroke-width="3"/><text x="464.6" y="193" text-anchor="middle" font-family="Liberation Sans" font-weight="bold" font-size="16.8" fill="#1f4e8c">4</text><g filter="url(#sh)"><path d="M542.3 215.4C538.8 208 524.6999999999999 199 524.6999999999999 186.2A17.6 17.6 0 1 1 559.9 186.2C559.9 199 545.8 208 542.3 215.4Z" fill="#7b845f"/></g><circle cx="542.3" cy="185.6" r="13.6" fill="#fff"/><circle cx="542.3" cy="221" r="4.8" fill="#fff" stroke="#7b845f" stroke-width="3"/><text x="542.3" y="193" text-anchor="middle" font-family="Liberation Sans" font-weight="bold" font-size="16.8" fill="#1f4e8c">5</text><g filter="url(#sh)"><path d="M628.6 215.4C625.1 208 611.0 199 611.0 186.2A17.6 17.6 0 1 1 646.2 186.2C646.2 199 632.1 208 628.6 215.4Z" fill="#7b845f"/></g><circle cx="628.6" cy="185.6" r="13.6" fill="#fff"/><circle cx="628.6" cy="221" r="4.8" fill="#fff" stroke="#7b845f" stroke-width="3"/><text x="628.6" y="193" text-anchor="middle" font-family="Liberation Sans" font-weight="bold" font-size="16.8" fill="#1f4e8c">6</text></svg>
<svg class="a" style="left:347.00px;top:115px;filter:drop-shadow(0.6px 0.6px 0.5px rgba(0,0,0,0.28));" width="10" height="26"><text x="0" y="20" font-size="14.8" text-anchor="start" textLength="211.00" lengthAdjust="spacingAndGlyphs" fill="#4aa9bb" font-weight="bold">ОСНОВНІ КРОКИ СТАЖИСТА</text></svg>
<div class="a" style="left:147.8px;top:230.9px;width:83.0px;height:94.4px;border:2.1px solid #f3d22a;border-radius:13px;"></div>
<svg class="a" style="left:163.12px;top:251px;" width="10" height="26"><text x="0" y="20" font-size="8.6" text-anchor="start" textLength="52.35" lengthAdjust="spacingAndGlyphs" fill="#3a3a3a">Рішення про</text></svg>
<svg class="a" style="left:161.80px;top:261px;" width="10" height="26"><text x="0" y="20" font-size="8.6" text-anchor="start" textLength="55.00" lengthAdjust="spacingAndGlyphs" fill="#3a3a3a">проходження</text></svg>
<svg class="a" style="left:165.01px;top:272px;" width="10" height="26"><text x="0" y="20" font-size="8.6" text-anchor="start" textLength="48.58" lengthAdjust="spacingAndGlyphs" fill="#3a3a3a">стажування</text></svg>
<div class="a" style="left:241.4px;top:230.9px;width:82.7px;height:94.4px;border:2.1px solid #f3d22a;border-radius:13px;"></div>
<svg class="a" style="left:267.26px;top:221px;" width="10" height="26"><text x="0" y="20" font-size="8.6" text-anchor="start" textLength="30.99" lengthAdjust="spacingAndGlyphs" fill="#3a3a3a">Подача</text></svg>
<svg class="a" style="left:266.88px;top:231px;" width="10" height="26"><text x="0" y="20" font-size="8.6" text-anchor="start" textLength="31.74" lengthAdjust="spacingAndGlyphs" fill="#3a3a3a">резюме</text></svg>
<svg class="a" style="left:260.09px;top:241px;" width="10" height="26"><text x="0" y="20" font-size="8.6" text-anchor="start" textLength="45.33" lengthAdjust="spacingAndGlyphs" fill="#3a3a3a">(анкети) та</text></svg>
<svg class="a" style="left:257.96px;top:251px;" width="10" height="26"><text x="0" y="20" font-size="8.6" text-anchor="start" textLength="49.58" lengthAdjust="spacingAndGlyphs" fill="#3a3a3a">необхідного</text></svg>
<svg class="a" style="left:269.10px;top:261px;" width="10" height="26"><text x="0" y="20" font-size="8.6" text-anchor="start" textLength="27.31" lengthAdjust="spacingAndGlyphs" fill="#3a3a3a">пакету</text></svg>
<svg class="a" style="left:250.98px;top:271px;" width="10" height="26"><text x="0" y="20" font-size="8.6" text-anchor="start" textLength="63.55" lengthAdjust="spacingAndGlyphs" fill="#3a3a3a">документів для</text></svg>
<svg class="a" style="left:255.25px;top:282px;" width="10" height="26"><text x="0" y="20" font-size="8.6" text-anchor="start" textLength="55.00" lengthAdjust="spacingAndGlyphs" fill="#3a3a3a">проходження</text></svg>
<svg class="a" style="left:258.46px;top:292px;" width="10" height="26"><text x="0" y="20" font-size="8.6" text-anchor="start" textLength="48.58" lengthAdjust="spacingAndGlyphs" fill="#3a3a3a">стажування</text></svg>
<div class="a" style="left:334.4px;top:230.9px;width:88.8px;height:94.4px;border:2.1px solid #f3d22a;border-radius:13px;"></div>
<svg class="a" style="left:360.96px;top:241px;" width="10" height="26"><text x="0" y="20" font-size="8.6" text-anchor="start" textLength="35.67" lengthAdjust="spacingAndGlyphs" fill="#3a3a3a">Участь у</text></svg>
<svg class="a" style="left:358.33px;top:251px;" width="10" height="26"><text x="0" y="20" font-size="8.6" text-anchor="start" textLength="40.93" lengthAdjust="spacingAndGlyphs" fill="#3a3a3a">складанні</text></svg>
<svg class="a" style="left:345.50px;top:261px;" width="10" height="26"><text x="0" y="20" font-size="8.6" text-anchor="start" textLength="66.60" lengthAdjust="spacingAndGlyphs" fill="#3a3a3a">індивідуального</text></svg>
<svg class="a" style="left:366.52px;top:272px;" width="10" height="26"><text x="0" y="20" font-size="8.6" text-anchor="start" textLength="24.57" lengthAdjust="spacingAndGlyphs" fill="#3a3a3a">плану</text></svg>
<svg class="a" style="left:354.51px;top:282px;" width="10" height="26"><text x="0" y="20" font-size="8.6" text-anchor="start" textLength="48.58" lengthAdjust="spacingAndGlyphs" fill="#3a3a3a">стажування</text></svg>
<div class="a" style="left:430.3px;top:230.9px;width:82.7px;height:94.4px;border:2.1px solid #f3d22a;border-radius:13px;"></div>
<svg class="a" style="left:449.25px;top:231px;" width="10" height="26"><text x="0" y="20" font-size="8.6" text-anchor="start" textLength="44.80" lengthAdjust="spacingAndGlyphs" fill="#3a3a3a">Виконання</text></svg>
<svg class="a" style="left:454.81px;top:241px;" width="10" height="26"><text x="0" y="20" font-size="8.6" text-anchor="start" textLength="33.68" lengthAdjust="spacingAndGlyphs" fill="#3a3a3a">завдань</text></svg>
<svg class="a" style="left:442.53px;top:251px;" width="10" height="26"><text x="0" y="20" font-size="8.6" text-anchor="start" textLength="58.23" lengthAdjust="spacingAndGlyphs" fill="#3a3a3a">затверджених</text></svg>
<svg class="a" style="left:469.26px;top:261px;" width="10" height="26"><text x="0" y="20" font-size="8.6" text-anchor="start" textLength="4.77" lengthAdjust="spacingAndGlyphs" fill="#3a3a3a">в</text></svg>
<svg class="a" style="left:442.39px;top:271px;" width="10" height="26"><text x="0" y="20" font-size="8.6" text-anchor="start" textLength="58.52" lengthAdjust="spacingAndGlyphs" fill="#3a3a3a">індивідуально</text></svg>
<svg class="a" style="left:453.98px;top:282px;" width="10" height="26"><text x="0" y="20" font-size="8.6" text-anchor="start" textLength="35.34" lengthAdjust="spacingAndGlyphs" fill="#3a3a3a">му плані</text></svg>
<div class="a" style="left:521.2px;top:230.9px;width:82.7px;height:94.4px;border:2.1px solid #f3d22a;border-radius:13px;"></div>
<svg class="a" style="left:543.19px;top:241px;" width="10" height="26"><text x="0" y="20" font-size="8.6" text-anchor="start" textLength="38.72" lengthAdjust="spacingAndGlyphs" fill="#3a3a3a">Зустрічі з</text></svg>
<svg class="a" style="left:535.38px;top:251px;" width="10" height="26"><text x="0" y="20" font-size="8.6" text-anchor="start" textLength="54.33" lengthAdjust="spacingAndGlyphs" fill="#3a3a3a">визначенням</text></svg>
<svg class="a" style="left:540.79px;top:261px;" width="10" height="26"><text x="0" y="20" font-size="8.6" text-anchor="start" textLength="43.53" lengthAdjust="spacingAndGlyphs" fill="#3a3a3a">проміжних</text></svg>
<svg class="a" style="left:539.03px;top:271px;" width="10" height="26"><text x="0" y="20" font-size="8.6" text-anchor="start" textLength="47.04" lengthAdjust="spacingAndGlyphs" fill="#3a3a3a">результатів</text></svg>
<div class="a" style="left:612.1px;top:230.9px;width:83.0px;height:94.4px;border:2.1px solid #f3d22a;border-radius:13px;"></div>
<svg class="a" style="left:627.06px;top:231px;" width="10" height="26"><text x="0" y="20" font-size="8.6" text-anchor="start" textLength="53.09" lengthAdjust="spacingAndGlyphs" fill="#3a3a3a">Подача звіту</text></svg>
<svg class="a" style="left:623.13px;top:241px;" width="10" height="26"><text x="0" y="20" font-size="8.6" text-anchor="start" textLength="60.94" lengthAdjust="spacingAndGlyphs" fill="#3a3a3a">про виконання</text></svg>
<svg class="a" style="left:635.51px;top:251px;" width="10" height="26"><text x="0" y="20" font-size="8.6" text-anchor="start" textLength="36.18" lengthAdjust="spacingAndGlyphs" fill="#3a3a3a">завдань,</text></svg>
<svg class="a" style="left:629.68px;top:261px;" width="10" height="26"><text x="0" y="20" font-size="8.6" text-anchor="start" textLength="47.84" lengthAdjust="spacingAndGlyphs" fill="#3a3a3a">визначених</text></svg>
<svg class="a" style="left:624.33px;top:272px;" width="10" height="26"><text x="0" y="20" font-size="8.6" text-anchor="start" textLength="58.54" lengthAdjust="spacingAndGlyphs" fill="#3a3a3a">індивідуальни</text></svg>
<svg class="a" style="left:633.64px;top:282px;" width="10" height="26"><text x="0" y="20" font-size="8.6" text-anchor="start" textLength="39.92" lengthAdjust="spacingAndGlyphs" fill="#3a3a3a">м планом</text></svg>
<svg class="a" style="left:629.31px;top:292px;" width="10" height="26"><text x="0" y="20" font-size="8.6" text-anchor="start" textLength="48.58" lengthAdjust="spacingAndGlyphs" fill="#3a3a3a">стажування</text></svg>
<div class="a" style="left:328.2px;top:353.9px;width:221.6px;height:37.2px;background:#4bb0c5;border-radius:5px;"></div>
<svg class="a" style="left:358.70px;top:351px;" width="10" height="26"><text x="0" y="20" font-size="8.1" text-anchor="start" textLength="160.50" lengthAdjust="spacingAndGlyphs" fill="#fff" font-weight="bold">Отримання довідки про проходження</text></svg>
<svg class="a" style="left:350.50px;top:361px;" width="10" height="26"><text x="0" y="20" font-size="8.1" text-anchor="start" textLength="176.90" lengthAdjust="spacingAndGlyphs" fill="#fff" font-weight="bold">стажування та рекомендаційного листа*</text></svg>
<svg class="a" style="left:826px;top:176px" width="198" height="120" viewBox="0 0 776 470"><defs><clipPath id="vc"><rect x="24" y="27" width="760" height="418"/></clipPath><filter id="vb" x="-5%" y="-5%" width="110%" height="110%"><feGaussianBlur stdDeviation="3"/></filter><filter id="vb2"><feGaussianBlur stdDeviation="1.5"/></filter><linearGradient id="ban" x1="0" y1="0" x2="0" y2="1"><stop offset="0" stop-color="#eef1f3"/><stop offset="0.6" stop-color="#e3e8ec"/><stop offset="1" stop-color="#c9d0d6"/></linearGradient><linearGradient id="suit" x1="0" y1="0" x2="1" y2="0"><stop offset="0" stop-color="#73757a"/><stop offset="0.500" stop-color="#5c5e63"/><stop offset="1" stop-color="#404146"/></linearGradient><linearGradient id="face" x1="0" y1="0" x2="1" y2="0"><stop offset="0" stop-color="#d6ab95"/><stop offset="0.550" stop-color="#c4947d"/><stop offset="1" stop-color="#8f6350"/></linearGradient></defs><g clip-path="url(#vc)"><rect x="24" y="27" width="760" height="418" fill="#8f979c"/><g filter="url(#vb)"><rect x="330" y="20" width="380" height="430" fill="#959da2"/><rect x="330" y="180" width="150" height="270" fill="#a3abb0"/><rect x="484" y="50" width="212" height="74" fill="#8d9499"/><rect x="484" y="133" width="212" height="76" fill="#8f969b"/><rect x="484" y="217" width="212" height="75" fill="#4a403e"/><rect x="335" y="38" width="372" height="11" fill="#3e2a25"/><rect x="472" y="124" width="234" height="9" fill="#3e2a25"/><rect x="472" y="208" width="234" height="9" fill="#3e2a25"/><rect x="470" y="40" width="13" height="260" fill="#3a2622"/><rect x="538" y="40" width="13" height="260" fill="#3a2622"/><rect x="694" y="40" width="13" height="410" fill="#3a2622"/><rect x="560" y="80" width="30" height="42" fill="#6e2a30"/><rect x="508" y="76" width="24" height="46" fill="#c4c9cd"/><rect x="488" y="80" width="16" height="42" fill="#3a3a40"/><rect x="600" y="88" width="40" height="34" fill="#b9b6b0"/><rect x="652" y="80" width="36" height="42" fill="#aaa6a2"/><rect x="500" y="150" width="30" height="56" fill="#c9dce8"/><rect x="556" y="160" width="46" height="48" fill="#c9c2b6"/><rect x="608" y="158" width="36" height="50" fill="#d9d5cd"/><rect x="650" y="162" width="34" height="46" fill="#cbcbc6"/><rect x="612" y="166" width="22" height="14" fill="#b8443c"/><rect x="548" y="228" width="26" height="58" fill="#2a2626"/><rect x="590" y="270" width="80" height="16" fill="#2e2a2c"/><rect x="484" y="290" width="226" height="170" fill="#5a2e22"/><rect x="705" y="20" width="90" height="430" fill="#b9c9d2"/><path d="M745 40c20 20 30 40 20 70c30 0 30 40 10 60c10 30-20 60-30 50c-30 10-50-20-40-50c-10-30 10-50 25-50c-10-30 0-60 15-80z" fill="#262e2a"/><rect x="700" y="280" width="90" height="170" fill="#4a3028"/><rect x="710" y="345" width="70" height="25" fill="#c0a070"/><rect x="20" y="20" width="315" height="430" fill="url(#ban)"/></g><g filter="url(#vb2)"><path d="M108 114C160 100 210 82 252 62" stroke="#c9a84a" stroke-width="4" fill="none"/><path d="M146 27h32l2 48l-36 4z" fill="#2b417f"/><path d="M196 27h38l-2 26l-36 6z" fill="#2b417f"/><path d="M146 110l32-6l2 42l-34 6z" fill="#2b417f"/><path d="M198 96l36-8l-2 48l-34 8z" fill="#2b417f"/><text x="162" y="62" font-family="Liberation Serif" font-size="22" fill="#e8ecf4" text-anchor="middle">Н</text><text x="215" y="50" font-family="Liberation Serif" font-size="20" fill="#e8ecf4" text-anchor="middle">А</text><text x="162" y="138" font-family="Liberation Serif" font-size="22" fill="#e8ecf4" text-anchor="middle">А</text><text x="215" y="128" font-family="Liberation Serif" font-size="22" fill="#e8ecf4" text-anchor="middle">С</text><text x="35" y="236" font-family="Liberation Sans" font-weight="bold" font-size="22" textLength="287" lengthAdjust="spacingAndGlyphs"><tspan fill="#3f6f9f">#Нова</tspan><tspan fill="#4f9a7a">Державна</tspan><tspan fill="#3f7f9f">Служба</tspan></text><text x="97" y="366" font-family="Liberation Sans" font-size="36" fill="#2b3f7c" textLength="64" lengthAdjust="spacingAndGlyphs">EU</text></g><g filter="url(#vb)"><path d="M150 450C165 380 185 310 230 292L330 258L470 262L575 300C625 320 645 380 655 450z" fill="url(#suit)"/><path d="M296 450L312 285L345 252L470 262L462 330L445 450z" fill="#e4e8f0"/><path d="M348 240l25 78l55 16l48-74z" fill="#a87a66"/><path d="M298 292L334 258L362 340L322 450L278 450z" fill="#66686d"/><path d="M470 262L505 300L478 450L436 450L458 340z" fill="#4a4c50"/><path d="M345 150C340 100 380 80 425 82C470 84 500 110 496 165C494 215 480 262 452 292C436 308 400 308 385 292C360 266 348 205 345 150z" fill="url(#face)"/><path d="M347 150C336 95 372 53 428 53C486 55 508 100 497 172C494 136 476 100 432 93C392 90 366 112 356 138z" fill="#2b2422"/><path d="M486 170c10-4 14 10 8 26c-3 9-9 12-12 8z" fill="#9a6d59"/><path d="M372 170h36M436 172h34" stroke="#4a352d" stroke-width="6" fill="none" opacity="0.8"/><path d="M378 186h24M442 188h22" stroke="#3a2a26" stroke-width="5" fill="none" opacity="0.7"/><path d="M398 266h40" stroke="#7a443c" stroke-width="7" opacity="0.8"/><path d="M392 282c20 14 44 10 62-8" stroke="#8f6a58" stroke-width="10" fill="none" opacity="0.7"/><path d="M418 200l-6 36h16" stroke="#a87a66" stroke-width="5" fill="none" opacity="0.7"/></g><rect x="24" y="396.500" width="345" height="50" fill="#404347" opacity="0.860"/><path d="M33 438v-8M43 438v-15M54 438v-23M65 438v-32" stroke="#f2f2f2" stroke-width="7"/><text x="82" y="433" font-family="Liberation Sans" font-size="31.5" fill="#f2f2f2" textLength="275" lengthAdjust="spacingAndGlyphs">Максим Гаврилюк</text></g></svg>
</div></body></html>
